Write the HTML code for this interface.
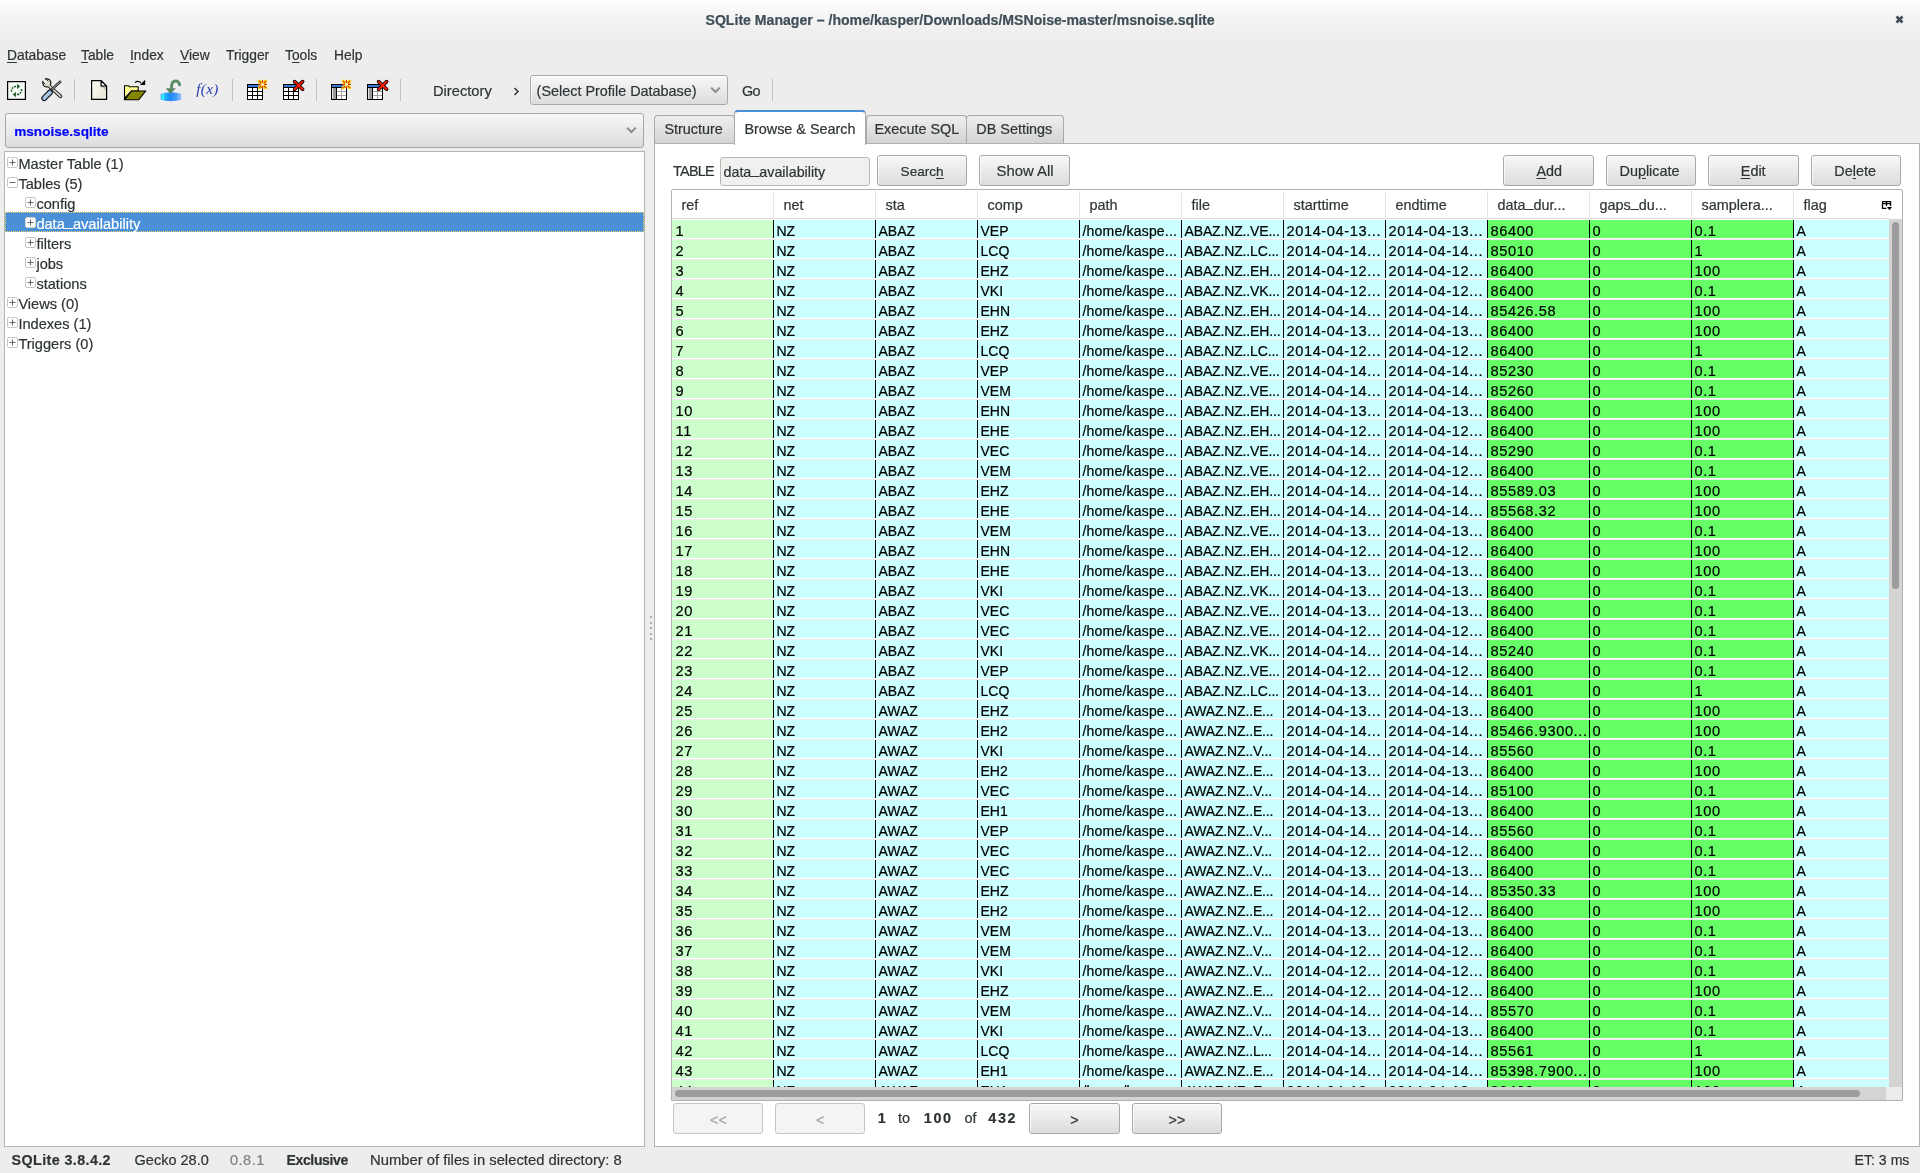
<!DOCTYPE html><html><head><meta charset="utf-8"><style>
html,body{margin:0;padding:0}
body{width:1920px;height:1173px;overflow:hidden;background:#ededed;position:relative;font-family:"Liberation Sans",sans-serif;color:#2e3436}
.t{position:absolute;white-space:pre;line-height:1;-webkit-text-stroke:0.2px currentColor}
.b{position:absolute;box-sizing:border-box}
.u{text-decoration:underline;text-underline-offset:2px}
svg{position:absolute;overflow:visible}
.btn{position:absolute;box-sizing:border-box;border:1px solid #a6a9a4;border-radius:3px;background:linear-gradient(#f8f8f8,#dcdcdc);box-shadow:inset 1px 1px 0 rgba(255,255,255,0.7)}
.btnd{position:absolute;box-sizing:border-box;border:1px solid #c6c6c6;border-radius:3px;background:#f4f4f2}
.sep{position:absolute;width:1px;background:#c0c0c0}
.us{position:relative;top:-3px}
</style></head><body><div id="root" style="position:absolute;left:0;top:0;width:1920px;height:1173px;overflow:hidden;will-change:transform">

<div class="b" style="left:0px;top:0px;width:1920px;height:38px;background:linear-gradient(#ffffff 0px,#f6f6f6 12px,#ededed 38px)"></div>
<div class="t" style="left:705.50px;top:12.66px;font-size:14.1px;font-weight:700;color:#3f4f57;">SQLite Manager – /home/kasper/Downloads/MSNoise-master/msnoise.sqlite</div>
<svg style="left:1895px;top:15px" width="9" height="9" viewBox="0 0 9 9"><path d="M1.5 1.5L7.5 7.5M7.5 1.5L1.5 7.5" stroke="#3c4b52" stroke-width="2.6" stroke-linecap="butt"/></svg>
<div class="t" style="left:7.00px;top:49.32px;font-size:13.8px;"><span class="u">D</span>atabase</div>
<div class="t" style="left:81.00px;top:49.32px;font-size:13.8px;"><span class="u">T</span>able</div>
<div class="t" style="left:130.00px;top:49.32px;font-size:13.8px;"><span class="u">I</span>ndex</div>
<div class="t" style="left:180.00px;top:49.32px;font-size:13.8px;"><span class="u">V</span>iew</div>
<div class="t" style="left:226.00px;top:49.32px;font-size:13.8px;">Trigger</div>
<div class="t" style="left:285.00px;top:49.32px;font-size:13.8px;">T<span class="u">o</span>ols</div>
<div class="t" style="left:334.00px;top:49.32px;font-size:13.8px;">Help</div>
<div class="sep" style="left:74px;top:79px;height:22px"></div>
<div class="sep" style="left:232px;top:79px;height:22px"></div>
<div class="sep" style="left:316px;top:79px;height:22px"></div>
<div class="sep" style="left:400px;top:79px;height:22px"></div>
<div class="sep" style="left:772px;top:79px;height:22px"></div>
<svg style="left:7px;top:81px" width="19" height="19" viewBox="0 0 19 19">
<rect x="0.6" y="0.6" width="17.8" height="17.8" fill="#f6fbf5" stroke="#000" stroke-width="1.2"/>
<path d="M4.4 10.8 C4.4 7.4 6.2 5.4 9 5.4 L10.6 5.4" fill="none" stroke="#1d5a2a" stroke-width="1.5" stroke-dasharray="2 0.9"/>
<path d="M10.1 2.7 L13.2 5.4 L10.1 8.1 Z" fill="#1d5a2a"/>
<path d="M14.6 8 C14.6 11.4 12.8 13.5 10 13.5 L8.4 13.5" fill="none" stroke="#1d5a2a" stroke-width="1.5" stroke-dasharray="2 0.9"/>
<path d="M8.9 10.8 L5.8 13.5 L8.9 16.2 Z" fill="#1d5a2a"/>
</svg>
<svg style="left:40px;top:77px" width="24" height="25" viewBox="0 0 24 25">
<path d="M9 9 L20.6 19.4" stroke="#1a1a1a" stroke-width="3.6" stroke-linecap="round"/>
<circle cx="6.8" cy="5.9" r="4" fill="#dedbcf" stroke="#1a1a1a" stroke-width="1.3"/>
<path d="M6.6 5.7 L2.6 1.7" stroke="#ededed" stroke-width="2.6" stroke-linecap="butt"/>
<path d="M5.4 7.4 L2.4 4.4 M8.4 4.4 L5.4 1.4" stroke="#1a1a1a" stroke-width="0.9"/>
<path d="M8.4 8.4 L20.6 19.4" stroke="#dedbcf" stroke-width="1.7" stroke-linecap="round"/>
<path d="M11.6 12.6 L20.2 4.8" stroke="#1a1a1a" stroke-width="2.5" stroke-linecap="round"/>
<path d="M11.6 12.6 L20.2 4.8" stroke="#d4d4d0" stroke-width="0.9" stroke-linecap="round"/>
<path d="M4.2 21.2 L10 15.4" stroke="#111" stroke-width="5.8" stroke-linecap="round"/>
<path d="M4.2 21.2 L10 15.4" stroke="#a2bde2" stroke-width="3.6" stroke-linecap="round"/>
<path d="M4.6 19.8 L8.8 15.6" stroke="#c8daf2" stroke-width="0.8" stroke-linecap="round"/>
</svg>
<svg style="left:91px;top:80px" width="17" height="20" viewBox="0 0 17 20">
<defs><linearGradient id="pg" x1="0" y1="0" x2="1" y2="1"><stop offset="0" stop-color="#fbfbf4"/><stop offset="1" stop-color="#e6e5d2"/></linearGradient></defs>
<path d="M0.6 0.6 H10.1 L15.6 6.1 V19.4 H0.6 Z" fill="url(#pg)" stroke="#000" stroke-width="1.2" stroke-linejoin="round"/>
<path d="M10.1 0.6 V6.1 H15.6 Z" fill="#fdfdfd" stroke="#000" stroke-width="1.2" stroke-linejoin="round"/>
<path d="M10.7 6.7 H15 V11 Z" fill="#bdbdb4"/>
</svg>
<svg style="left:123px;top:79px" width="24" height="22" viewBox="0 0 24 22">
<defs><pattern id="chk" width="2" height="2" patternUnits="userSpaceOnUse"><rect width="2" height="2" fill="#ffff20"/><rect width="1" height="1" fill="#fff"/><rect x="1" y="1" width="1" height="1" fill="#fff"/></pattern></defs>
<path d="M1.5 20.3 V6.8 H5.6 L6.6 7.8 H15.2 V12 H8.6 L1.5 19.5 Z" fill="url(#chk)" stroke="#000" stroke-width="1.1" stroke-linejoin="round"/>
<path d="M1.5 20.8 H15.6 L22.8 12 H8.6 Z" fill="#858500" stroke="#000" stroke-width="1.1" stroke-linejoin="round"/>
<path d="M12 3.6 Q14.5 1 18 3.8" fill="none" stroke="#000" stroke-width="1.1"/>
<path d="M16.8 6 H22.2 V0.8 Z" fill="#000"/>
</svg>
<svg style="left:160px;top:79px" width="22" height="23" viewBox="0 0 22 23">
<defs><linearGradient id="disc" x1="0" x2="1" y1="0" y2="0"><stop offset="0" stop-color="#22d8ff"/><stop offset="0.1" stop-color="#40fcff"/><stop offset="0.2" stop-color="#1ab8ff"/><stop offset="0.45" stop-color="#1a86ff"/><stop offset="0.8" stop-color="#4aa0f8"/><stop offset="1" stop-color="#a8cdf6"/></linearGradient></defs>
<path d="M1 15.2 Q10.8 12 20.6 15.2 V20.4 Q10.8 23.4 1 20.4 Z" fill="url(#disc)" stroke="#3a8cff" stroke-width="0.6" stroke-linejoin="round"/>
<path d="M19.6 5.8 C19.2 1 12.2 0.2 11.6 6.8 L11.3 9.8" fill="none" stroke="#5b8a66" stroke-width="2.9" stroke-linecap="round"/>
<path d="M5.8 9.2 H15.9 L10.4 15 Z" fill="#5b8a66"/>
</svg>
<div class="t" style="left:196.30px;top:81.43px;font-size:15.2px;color:#2a3aae;letter-spacing:0.3px;font-family:'Liberation Serif',serif;-webkit-text-stroke:0;"><i>f(x)</i></div>
<svg style="left:246px;top:79px" width="24" height="22" viewBox="0 0 24 22"><rect x="1" y="5" width="16" height="16" fill="#000"/><rect x="2" y="6" width="14" height="2" fill="#3a78d0"/><rect x="2" y="9" width="4" height="3" fill="#fff"/><rect x="2" y="13" width="4" height="3" fill="#fff"/><rect x="2" y="17" width="4" height="3" fill="#fff"/><rect x="7" y="9" width="4" height="3" fill="#fff"/><rect x="7" y="13" width="4" height="3" fill="#fff"/><rect x="7" y="17" width="4" height="3" fill="#fff"/><rect x="12" y="9" width="4" height="3" fill="#fff"/><rect x="12" y="13" width="4" height="3" fill="#fff"/><rect x="12" y="17" width="4" height="3" fill="#fff"/><path d="M17.90 6.85 L19.80 8.75 M17.90 4.05 L19.80 2.15 M15.10 6.85 L13.20 8.75 M15.10 4.05 L13.20 2.15 " stroke="#ffd400" stroke-width="3" stroke-linecap="round"/><path d="M17.90 6.85 L19.80 8.75 M17.90 4.05 L19.80 2.15 M15.10 6.85 L13.20 8.75 M15.10 4.05 L13.20 2.15 " stroke="#fff066" stroke-width="0.6" stroke-linecap="round" opacity="0.0"/><path d="M18.40 7.35 L19.70 8.65 M18.40 3.55 L19.70 2.25 M14.60 7.35 L13.30 8.65 M14.60 3.55 L13.30 2.25 " stroke="#d83a00" stroke-width="1.1" stroke-linecap="round"/><path d="M16.5 1.0499999999999998 V4.25 M16.5 6.65 V9.850000000000001 M12.1 5.45 H15.3 M17.7 5.45 H20.9" stroke="#d83a00" stroke-width="1.2"/><circle cx="16.5" cy="5.45" r="1.3" fill="#fff"/></svg>
<svg style="left:282px;top:79px" width="24" height="22" viewBox="0 0 24 22"><rect x="1" y="5" width="16" height="16" fill="#000"/><rect x="2" y="6" width="14" height="2" fill="#3a78d0"/><rect x="2" y="9" width="4" height="3" fill="#fff"/><rect x="2" y="13" width="4" height="3" fill="#fff"/><rect x="2" y="17" width="4" height="3" fill="#fff"/><rect x="7" y="9" width="4" height="3" fill="#fff"/><rect x="7" y="13" width="4" height="3" fill="#fff"/><rect x="7" y="17" width="4" height="3" fill="#fff"/><rect x="12" y="9" width="4" height="3" fill="#fff"/><rect x="12" y="13" width="4" height="3" fill="#fff"/><rect x="12" y="17" width="4" height="3" fill="#fff"/><path d="M12.6 2.6 L20.6 10.2 M20.6 2.6 L12.6 10.2" stroke="#000" stroke-width="3.6" stroke-linecap="round"/><path d="M12.6 2.6 L20.6 10.2 M20.6 2.6 L12.6 10.2" stroke="#ff1a00" stroke-width="2" stroke-linecap="round"/></svg>
<svg style="left:330px;top:79px" width="24" height="22" viewBox="0 0 24 22"><rect x="1" y="5" width="16" height="16" fill="#000"/><rect x="2" y="6" width="14" height="2" fill="#3a78d0"/><rect x="2" y="9" width="4" height="11" fill="#9a9a98"/><rect x="2" y="9" width="1" height="11" fill="#e6e4dc"/><rect x="7" y="9" width="9" height="11" fill="#fff"/><rect x="11" y="9" width="1" height="11" fill="#a0a09c"/><rect x="7" y="12" width="9" height="1" fill="#a0a09c"/><rect x="7" y="16" width="9" height="1" fill="#a0a09c"/><path d="M17.90 6.85 L19.80 8.75 M17.90 4.05 L19.80 2.15 M15.10 6.85 L13.20 8.75 M15.10 4.05 L13.20 2.15 " stroke="#ffd400" stroke-width="3" stroke-linecap="round"/><path d="M17.90 6.85 L19.80 8.75 M17.90 4.05 L19.80 2.15 M15.10 6.85 L13.20 8.75 M15.10 4.05 L13.20 2.15 " stroke="#fff066" stroke-width="0.6" stroke-linecap="round" opacity="0.0"/><path d="M18.40 7.35 L19.70 8.65 M18.40 3.55 L19.70 2.25 M14.60 7.35 L13.30 8.65 M14.60 3.55 L13.30 2.25 " stroke="#d83a00" stroke-width="1.1" stroke-linecap="round"/><path d="M16.5 1.0499999999999998 V4.25 M16.5 6.65 V9.850000000000001 M12.1 5.45 H15.3 M17.7 5.45 H20.9" stroke="#d83a00" stroke-width="1.2"/><circle cx="16.5" cy="5.45" r="1.3" fill="#fff"/></svg>
<svg style="left:366px;top:79px" width="24" height="22" viewBox="0 0 24 22"><rect x="1" y="5" width="16" height="16" fill="#000"/><rect x="2" y="6" width="14" height="2" fill="#3a78d0"/><rect x="2" y="9" width="4" height="11" fill="#9a9a98"/><rect x="2" y="9" width="1" height="11" fill="#e6e4dc"/><rect x="7" y="9" width="9" height="11" fill="#fff"/><rect x="11" y="9" width="1" height="11" fill="#a0a09c"/><rect x="7" y="12" width="9" height="1" fill="#a0a09c"/><rect x="7" y="16" width="9" height="1" fill="#a0a09c"/><path d="M12.6 2.6 L20.6 10.2 M20.6 2.6 L12.6 10.2" stroke="#000" stroke-width="3.6" stroke-linecap="round"/><path d="M12.6 2.6 L20.6 10.2 M20.6 2.6 L12.6 10.2" stroke="#ff1a00" stroke-width="2" stroke-linecap="round"/></svg>
<div class="t" style="left:433.00px;top:83.76px;font-size:14.7px;">Directory</div>
<svg style="left:513px;top:87px" width="7" height="9" viewBox="0 0 7 9"><path d="M1.5 1 L5 4.5 L1.5 8" fill="none" stroke="#2e3436" stroke-width="1.5"/></svg>
<div class="btn" style="left:530px;top:75px;width:198px;height:30px"></div>
<div class="t" style="left:536.60px;top:84.01px;font-size:14.4px;">(Select Profile Database)</div>
<svg style="left:710px;top:86px" width="11" height="8" viewBox="0 0 11 8"><path d="M1.2 1.6 L5.5 6 L9.8 1.6" fill="none" stroke="#8b8d89" stroke-width="2"/></svg>
<div class="t" style="left:742.00px;top:84.01px;font-size:14.4px;letter-spacing:-0.8px;">Go</div>
<div class="b" style="left:5px;top:113px;width:639px;height:35px;border:1px solid #a6a8a4;border-radius:3px;background:linear-gradient(#f8f8f8,#dcdcdc)"></div>
<div class="t" style="left:14.20px;top:124.59px;font-size:13.6px;font-weight:700;color:#0000ff;">msnoise.sqlite</div>
<svg style="left:626px;top:126px" width="11" height="8" viewBox="0 0 11 8"><path d="M1 1.6 L5.4 6 L9.8 1.6" fill="none" stroke="#8b8d89" stroke-width="2"/></svg>
<div class="b" style="left:4px;top:151px;width:641px;height:996px;border:1px solid #b4b6b2;background:#fff"></div>
<div class="b" style="left:5px;top:212px;width:639px;height:20px;background:#4a90d9;border:1px dotted #f2d36a"></div>
<svg style="left:7px;top:157px" width="11" height="11" viewBox="0 0 11 11"><rect x="0.5" y="0.5" width="10" height="10" rx="1.5" fill="#fff" stroke="#c8c8c4" stroke-width="1"/><path d="M2.5 5.5 H8.5" stroke="#666" stroke-width="1"/><path d="M5.5 2.5 V8.5" stroke="#666" stroke-width="1"/></svg>
<div class="t" style="left:18.40px;top:156.64px;font-size:14.6px;">Master Table (1)</div>
<svg style="left:7px;top:177px" width="11" height="11" viewBox="0 0 11 11"><rect x="0.5" y="0.5" width="10" height="10" rx="1.5" fill="#fff" stroke="#c8c8c4" stroke-width="1"/><path d="M2.5 5.5 H8.5" stroke="#666" stroke-width="1"/></svg>
<div class="t" style="left:18.40px;top:176.64px;font-size:14.6px;">Tables (5)</div>
<svg style="left:25px;top:197px" width="11" height="11" viewBox="0 0 11 11"><rect x="0.5" y="0.5" width="10" height="10" rx="1.5" fill="#fff" stroke="#c8c8c4" stroke-width="1"/><path d="M2.5 5.5 H8.5" stroke="#666" stroke-width="1"/><path d="M5.5 2.5 V8.5" stroke="#666" stroke-width="1"/></svg>
<div class="t" style="left:36.40px;top:196.64px;font-size:14.6px;">config</div>
<svg style="left:25px;top:217px" width="11" height="11" viewBox="0 0 11 11"><rect x="0.5" y="0.5" width="10" height="10" rx="1.5" fill="#fff" stroke="#d8d4c8" stroke-width="1"/><path d="M2.5 5.5 H8.5" stroke="#666" stroke-width="1"/><path d="M5.5 2.5 V8.5" stroke="#666" stroke-width="1"/></svg>
<div class="t" style="left:36.40px;top:216.64px;font-size:14.6px;color:#ffffff;">data<span class="us">_</span>availability</div>
<svg style="left:25px;top:237px" width="11" height="11" viewBox="0 0 11 11"><rect x="0.5" y="0.5" width="10" height="10" rx="1.5" fill="#fff" stroke="#c8c8c4" stroke-width="1"/><path d="M2.5 5.5 H8.5" stroke="#666" stroke-width="1"/><path d="M5.5 2.5 V8.5" stroke="#666" stroke-width="1"/></svg>
<div class="t" style="left:36.40px;top:236.64px;font-size:14.6px;">filters</div>
<svg style="left:25px;top:257px" width="11" height="11" viewBox="0 0 11 11"><rect x="0.5" y="0.5" width="10" height="10" rx="1.5" fill="#fff" stroke="#c8c8c4" stroke-width="1"/><path d="M2.5 5.5 H8.5" stroke="#666" stroke-width="1"/><path d="M5.5 2.5 V8.5" stroke="#666" stroke-width="1"/></svg>
<div class="t" style="left:36.40px;top:256.64px;font-size:14.6px;">jobs</div>
<svg style="left:25px;top:277px" width="11" height="11" viewBox="0 0 11 11"><rect x="0.5" y="0.5" width="10" height="10" rx="1.5" fill="#fff" stroke="#c8c8c4" stroke-width="1"/><path d="M2.5 5.5 H8.5" stroke="#666" stroke-width="1"/><path d="M5.5 2.5 V8.5" stroke="#666" stroke-width="1"/></svg>
<div class="t" style="left:36.40px;top:276.64px;font-size:14.6px;">stations</div>
<svg style="left:7px;top:297px" width="11" height="11" viewBox="0 0 11 11"><rect x="0.5" y="0.5" width="10" height="10" rx="1.5" fill="#fff" stroke="#c8c8c4" stroke-width="1"/><path d="M2.5 5.5 H8.5" stroke="#666" stroke-width="1"/><path d="M5.5 2.5 V8.5" stroke="#666" stroke-width="1"/></svg>
<div class="t" style="left:18.40px;top:296.64px;font-size:14.6px;">Views (0)</div>
<svg style="left:7px;top:317px" width="11" height="11" viewBox="0 0 11 11"><rect x="0.5" y="0.5" width="10" height="10" rx="1.5" fill="#fff" stroke="#c8c8c4" stroke-width="1"/><path d="M2.5 5.5 H8.5" stroke="#666" stroke-width="1"/><path d="M5.5 2.5 V8.5" stroke="#666" stroke-width="1"/></svg>
<div class="t" style="left:18.40px;top:316.64px;font-size:14.6px;">Indexes (1)</div>
<svg style="left:7px;top:337px" width="11" height="11" viewBox="0 0 11 11"><rect x="0.5" y="0.5" width="10" height="10" rx="1.5" fill="#fff" stroke="#c8c8c4" stroke-width="1"/><path d="M2.5 5.5 H8.5" stroke="#666" stroke-width="1"/><path d="M5.5 2.5 V8.5" stroke="#666" stroke-width="1"/></svg>
<div class="t" style="left:18.40px;top:336.64px;font-size:14.6px;">Triggers (0)</div>
<div class="b" style="left:650px;top:616.0px;width:2px;height:2px;background:#b0b0ac"></div>
<div class="b" style="left:650px;top:621.5px;width:2px;height:2px;background:#b0b0ac"></div>
<div class="b" style="left:650px;top:627.0px;width:2px;height:2px;background:#b0b0ac"></div>
<div class="b" style="left:650px;top:632.5px;width:2px;height:2px;background:#b0b0ac"></div>
<div class="b" style="left:650px;top:638.0px;width:2px;height:2px;background:#b0b0ac"></div>
<div class="b" style="left:654px;top:143px;width:1266px;height:1004px;border:1px solid #b0b2ae;background:#fff"></div>
<div class="b" style="left:654px;top:115px;width:81px;height:28px;border:1px solid #a8aaa6;border-bottom:none;border-radius:4px 4px 0 0;background:linear-gradient(#efefef,#d3d3d3)"></div>
<div class="t" style="left:664.40px;top:121.56px;font-size:14.4px;">Structure</div>
<div class="b" style="left:866px;top:115px;width:101px;height:28px;border:1px solid #a8aaa6;border-bottom:none;border-radius:4px 4px 0 0;background:linear-gradient(#efefef,#d3d3d3)"></div>
<div class="t" style="left:874.40px;top:121.56px;font-size:14.4px;">Execute SQL</div>
<div class="b" style="left:966px;top:115px;width:98px;height:28px;border:1px solid #a8aaa6;border-bottom:none;border-radius:4px 4px 0 0;background:linear-gradient(#efefef,#d3d3d3)"></div>
<div class="t" style="left:976.30px;top:121.56px;font-size:14.4px;">DB Settings</div>
<div class="b" style="left:734px;top:110px;width:132px;height:35px;border:1px solid #a8aaa6;border-top:2px solid #4a90d9;border-bottom:none;border-radius:4px 4px 0 0;background:#fff"></div>
<div class="t" style="left:744.40px;top:121.56px;font-size:14.4px;">Browse &amp; Search</div>
<div class="t" style="left:673.00px;top:164.41px;font-size:14.4px;letter-spacing:-0.7px;">TABLE</div>
<div class="b" style="left:720px;top:157px;width:150px;height:29px;border:1px solid #b8b8b4;border-radius:3px;background:#f0f0ee"></div>
<div class="t" style="left:723.50px;top:164.80px;font-size:14.3px;">data<span class="us">_</span>availability</div>
<div class="btn" style="left:877px;top:155px;width:90px;height:31px"></div>
<div class="t" style="left:900.60px;top:165.39px;font-size:13.6px;">Searc<span class="u">h</span></div>
<div class="btn" style="left:979px;top:155px;width:91px;height:31px"></div>
<div class="t" style="left:996.50px;top:164.29px;font-size:14.9px;">Show All</div>
<div class="btn" style="left:1503px;top:155px;width:91px;height:31px"></div>
<div class="t" style="left:1536.50px;top:163.71px;font-size:14.4px;"><span class="u">A</span>dd</div>
<div class="btn" style="left:1606px;top:155px;width:90px;height:31px"></div>
<div class="t" style="left:1619.50px;top:163.71px;font-size:14.4px;">Du<span class="u">p</span>licate</div>
<div class="btn" style="left:1708px;top:155px;width:91px;height:31px"></div>
<div class="t" style="left:1740.80px;top:163.71px;font-size:14.4px;"><span class="u">E</span>dit</div>
<div class="btn" style="left:1811px;top:155px;width:90px;height:31px"></div>
<div class="t" style="left:1834.30px;top:163.71px;font-size:14.4px;">De<span class="u">l</span>ete</div>
<div class="b" style="left:671px;top:189px;width:1232px;height:912px;border:1px solid #b0b2ae;border-radius:2px 2px 0 0;background:#fff"></div>
<div class="b" style="left:672px;top:218px;width:1217px;height:1px;background:#dadad8"></div>
<div class="t" style="left:681.50px;top:197.81px;font-size:14.4px;">ref</div>
<div class="b" style="left:773px;top:191px;width:1px;height:27px;background:#e4e4e2"></div>
<div class="t" style="left:783.50px;top:197.81px;font-size:14.4px;">net</div>
<div class="b" style="left:875px;top:191px;width:1px;height:27px;background:#e4e4e2"></div>
<div class="t" style="left:885.50px;top:197.81px;font-size:14.4px;">sta</div>
<div class="b" style="left:977px;top:191px;width:1px;height:27px;background:#e4e4e2"></div>
<div class="t" style="left:987.50px;top:197.81px;font-size:14.4px;">comp</div>
<div class="b" style="left:1079px;top:191px;width:1px;height:27px;background:#e4e4e2"></div>
<div class="t" style="left:1089.50px;top:197.81px;font-size:14.4px;">path</div>
<div class="b" style="left:1181px;top:191px;width:1px;height:27px;background:#e4e4e2"></div>
<div class="t" style="left:1191.50px;top:197.81px;font-size:14.4px;">file</div>
<div class="b" style="left:1283px;top:191px;width:1px;height:27px;background:#e4e4e2"></div>
<div class="t" style="left:1293.50px;top:197.81px;font-size:14.4px;">starttime</div>
<div class="b" style="left:1385px;top:191px;width:1px;height:27px;background:#e4e4e2"></div>
<div class="t" style="left:1395.50px;top:197.81px;font-size:14.4px;">endtime</div>
<div class="b" style="left:1487px;top:191px;width:1px;height:27px;background:#e4e4e2"></div>
<div class="t" style="left:1497.50px;top:197.81px;font-size:14.4px;">data<span class="us">_</span>dur...</div>
<div class="b" style="left:1589px;top:191px;width:1px;height:27px;background:#e4e4e2"></div>
<div class="t" style="left:1599.50px;top:197.81px;font-size:14.4px;">gaps<span class="us">_</span>du...</div>
<div class="b" style="left:1691px;top:191px;width:1px;height:27px;background:#e4e4e2"></div>
<div class="t" style="left:1701.50px;top:197.81px;font-size:14.4px;">samplera...</div>
<div class="b" style="left:1793px;top:191px;width:1px;height:27px;background:#e4e4e2"></div>
<div class="t" style="left:1803.50px;top:197.81px;font-size:14.4px;">flag</div>
<svg style="left:1881px;top:200px" width="12" height="11" viewBox="0 0 12 11"><path d="M1.5 8.3 V1.6 H9.6 V5.4 M1.5 3.5 H9.6 M5.5 1.6 V5.4 M1.5 8.3 H5" fill="none" stroke="#000" stroke-width="1.25" stroke-linecap="round" stroke-linejoin="round"/><path d="M6 7 H11 L8.5 10.2 Z" fill="#000"/></svg>
<div style="position:absolute;left:672px;top:219px;width:1217px;height:868px;overflow:hidden">
<div class="b" style="left:0;top:1px;width:101px;height:18px;background:#ccffcc"></div>
<div class="b" style="left:101px;top:1px;width:714px;height:18px;background:#ccffff"></div>
<div class="b" style="left:815px;top:1px;width:306px;height:18px;background:#66ff66"></div>
<div class="b" style="left:1121px;top:1px;width:96px;height:18px;background:#ccffff"></div>
<div class="b" style="left:0;top:20px;width:1217px;height:1px;background:#ebebeb"></div>
<div class="b" style="left:101px;top:1px;width:1px;height:18px;background:#000"></div>
<div class="b" style="left:203px;top:1px;width:1px;height:18px;background:#000"></div>
<div class="b" style="left:305px;top:1px;width:1px;height:18px;background:#000"></div>
<div class="b" style="left:407px;top:1px;width:1px;height:18px;background:#000"></div>
<div class="b" style="left:509px;top:1px;width:1px;height:18px;background:#000"></div>
<div class="b" style="left:611px;top:1px;width:1px;height:18px;background:#000"></div>
<div class="b" style="left:713px;top:1px;width:1px;height:18px;background:#000"></div>
<div class="b" style="left:815px;top:1px;width:1px;height:18px;background:#000"></div>
<div class="b" style="left:917px;top:1px;width:1px;height:18px;background:#000"></div>
<div class="b" style="left:1019px;top:1px;width:1px;height:18px;background:#000"></div>
<div class="b" style="left:1121px;top:1px;width:1px;height:18px;background:#000"></div>
<div class="t" style="left:3.50px;top:4.84px;font-size:14.6px;color:#000;letter-spacing:0.6px;">1</div>
<div class="t" style="left:104.50px;top:5.35px;font-size:14.0px;color:#000;">NZ</div>
<div class="t" style="left:206.50px;top:5.35px;font-size:14.0px;color:#000;">ABAZ</div>
<div class="t" style="left:308.50px;top:5.35px;font-size:14.0px;color:#000;">VEP</div>
<div class="t" style="left:410.50px;top:5.35px;font-size:14.0px;color:#000;letter-spacing:0.2px;">/home/kaspe...</div>
<div class="t" style="left:512.50px;top:5.35px;font-size:14.0px;color:#000;letter-spacing:-0.15px;">ABAZ.NZ..VE...</div>
<div class="t" style="left:614.50px;top:4.84px;font-size:14.6px;color:#000;letter-spacing:0.6px;">2014-04-13...</div>
<div class="t" style="left:716.50px;top:4.84px;font-size:14.6px;color:#000;letter-spacing:0.6px;">2014-04-13...</div>
<div class="t" style="left:818.50px;top:4.84px;font-size:14.6px;color:#000;letter-spacing:0.6px;">86400</div>
<div class="t" style="left:920.50px;top:4.84px;font-size:14.6px;color:#000;letter-spacing:0.6px;">0</div>
<div class="t" style="left:1022.50px;top:4.84px;font-size:14.6px;color:#000;letter-spacing:0.6px;">0.1</div>
<div class="t" style="left:1124.50px;top:5.35px;font-size:14.0px;color:#000;">A</div>
<div class="b" style="left:0;top:21px;width:101px;height:18px;background:#ccffcc"></div>
<div class="b" style="left:101px;top:21px;width:714px;height:18px;background:#ccffff"></div>
<div class="b" style="left:815px;top:21px;width:306px;height:18px;background:#66ff66"></div>
<div class="b" style="left:1121px;top:21px;width:96px;height:18px;background:#ccffff"></div>
<div class="b" style="left:0;top:40px;width:1217px;height:1px;background:#ebebeb"></div>
<div class="b" style="left:101px;top:21px;width:1px;height:18px;background:#000"></div>
<div class="b" style="left:203px;top:21px;width:1px;height:18px;background:#000"></div>
<div class="b" style="left:305px;top:21px;width:1px;height:18px;background:#000"></div>
<div class="b" style="left:407px;top:21px;width:1px;height:18px;background:#000"></div>
<div class="b" style="left:509px;top:21px;width:1px;height:18px;background:#000"></div>
<div class="b" style="left:611px;top:21px;width:1px;height:18px;background:#000"></div>
<div class="b" style="left:713px;top:21px;width:1px;height:18px;background:#000"></div>
<div class="b" style="left:815px;top:21px;width:1px;height:18px;background:#000"></div>
<div class="b" style="left:917px;top:21px;width:1px;height:18px;background:#000"></div>
<div class="b" style="left:1019px;top:21px;width:1px;height:18px;background:#000"></div>
<div class="b" style="left:1121px;top:21px;width:1px;height:18px;background:#000"></div>
<div class="t" style="left:3.50px;top:24.84px;font-size:14.6px;color:#000;letter-spacing:0.6px;">2</div>
<div class="t" style="left:104.50px;top:25.35px;font-size:14.0px;color:#000;">NZ</div>
<div class="t" style="left:206.50px;top:25.35px;font-size:14.0px;color:#000;">ABAZ</div>
<div class="t" style="left:308.50px;top:25.35px;font-size:14.0px;color:#000;">LCQ</div>
<div class="t" style="left:410.50px;top:25.35px;font-size:14.0px;color:#000;letter-spacing:0.2px;">/home/kaspe...</div>
<div class="t" style="left:512.50px;top:25.35px;font-size:14.0px;color:#000;letter-spacing:-0.15px;">ABAZ.NZ..LC...</div>
<div class="t" style="left:614.50px;top:24.84px;font-size:14.6px;color:#000;letter-spacing:0.6px;">2014-04-14...</div>
<div class="t" style="left:716.50px;top:24.84px;font-size:14.6px;color:#000;letter-spacing:0.6px;">2014-04-14...</div>
<div class="t" style="left:818.50px;top:24.84px;font-size:14.6px;color:#000;letter-spacing:0.6px;">85010</div>
<div class="t" style="left:920.50px;top:24.84px;font-size:14.6px;color:#000;letter-spacing:0.6px;">0</div>
<div class="t" style="left:1022.50px;top:24.84px;font-size:14.6px;color:#000;letter-spacing:0.6px;">1</div>
<div class="t" style="left:1124.50px;top:25.35px;font-size:14.0px;color:#000;">A</div>
<div class="b" style="left:0;top:41px;width:101px;height:18px;background:#ccffcc"></div>
<div class="b" style="left:101px;top:41px;width:714px;height:18px;background:#ccffff"></div>
<div class="b" style="left:815px;top:41px;width:306px;height:18px;background:#66ff66"></div>
<div class="b" style="left:1121px;top:41px;width:96px;height:18px;background:#ccffff"></div>
<div class="b" style="left:0;top:60px;width:1217px;height:1px;background:#ebebeb"></div>
<div class="b" style="left:101px;top:41px;width:1px;height:18px;background:#000"></div>
<div class="b" style="left:203px;top:41px;width:1px;height:18px;background:#000"></div>
<div class="b" style="left:305px;top:41px;width:1px;height:18px;background:#000"></div>
<div class="b" style="left:407px;top:41px;width:1px;height:18px;background:#000"></div>
<div class="b" style="left:509px;top:41px;width:1px;height:18px;background:#000"></div>
<div class="b" style="left:611px;top:41px;width:1px;height:18px;background:#000"></div>
<div class="b" style="left:713px;top:41px;width:1px;height:18px;background:#000"></div>
<div class="b" style="left:815px;top:41px;width:1px;height:18px;background:#000"></div>
<div class="b" style="left:917px;top:41px;width:1px;height:18px;background:#000"></div>
<div class="b" style="left:1019px;top:41px;width:1px;height:18px;background:#000"></div>
<div class="b" style="left:1121px;top:41px;width:1px;height:18px;background:#000"></div>
<div class="t" style="left:3.50px;top:44.84px;font-size:14.6px;color:#000;letter-spacing:0.6px;">3</div>
<div class="t" style="left:104.50px;top:45.35px;font-size:14.0px;color:#000;">NZ</div>
<div class="t" style="left:206.50px;top:45.35px;font-size:14.0px;color:#000;">ABAZ</div>
<div class="t" style="left:308.50px;top:45.35px;font-size:14.0px;color:#000;">EHZ</div>
<div class="t" style="left:410.50px;top:45.35px;font-size:14.0px;color:#000;letter-spacing:0.2px;">/home/kaspe...</div>
<div class="t" style="left:512.50px;top:45.35px;font-size:14.0px;color:#000;letter-spacing:-0.15px;">ABAZ.NZ..EH...</div>
<div class="t" style="left:614.50px;top:44.84px;font-size:14.6px;color:#000;letter-spacing:0.6px;">2014-04-12...</div>
<div class="t" style="left:716.50px;top:44.84px;font-size:14.6px;color:#000;letter-spacing:0.6px;">2014-04-12...</div>
<div class="t" style="left:818.50px;top:44.84px;font-size:14.6px;color:#000;letter-spacing:0.6px;">86400</div>
<div class="t" style="left:920.50px;top:44.84px;font-size:14.6px;color:#000;letter-spacing:0.6px;">0</div>
<div class="t" style="left:1022.50px;top:44.84px;font-size:14.6px;color:#000;letter-spacing:0.6px;">100</div>
<div class="t" style="left:1124.50px;top:45.35px;font-size:14.0px;color:#000;">A</div>
<div class="b" style="left:0;top:61px;width:101px;height:18px;background:#ccffcc"></div>
<div class="b" style="left:101px;top:61px;width:714px;height:18px;background:#ccffff"></div>
<div class="b" style="left:815px;top:61px;width:306px;height:18px;background:#66ff66"></div>
<div class="b" style="left:1121px;top:61px;width:96px;height:18px;background:#ccffff"></div>
<div class="b" style="left:0;top:80px;width:1217px;height:1px;background:#ebebeb"></div>
<div class="b" style="left:101px;top:61px;width:1px;height:18px;background:#000"></div>
<div class="b" style="left:203px;top:61px;width:1px;height:18px;background:#000"></div>
<div class="b" style="left:305px;top:61px;width:1px;height:18px;background:#000"></div>
<div class="b" style="left:407px;top:61px;width:1px;height:18px;background:#000"></div>
<div class="b" style="left:509px;top:61px;width:1px;height:18px;background:#000"></div>
<div class="b" style="left:611px;top:61px;width:1px;height:18px;background:#000"></div>
<div class="b" style="left:713px;top:61px;width:1px;height:18px;background:#000"></div>
<div class="b" style="left:815px;top:61px;width:1px;height:18px;background:#000"></div>
<div class="b" style="left:917px;top:61px;width:1px;height:18px;background:#000"></div>
<div class="b" style="left:1019px;top:61px;width:1px;height:18px;background:#000"></div>
<div class="b" style="left:1121px;top:61px;width:1px;height:18px;background:#000"></div>
<div class="t" style="left:3.50px;top:64.84px;font-size:14.6px;color:#000;letter-spacing:0.6px;">4</div>
<div class="t" style="left:104.50px;top:65.35px;font-size:14.0px;color:#000;">NZ</div>
<div class="t" style="left:206.50px;top:65.35px;font-size:14.0px;color:#000;">ABAZ</div>
<div class="t" style="left:308.50px;top:65.35px;font-size:14.0px;color:#000;">VKI</div>
<div class="t" style="left:410.50px;top:65.35px;font-size:14.0px;color:#000;letter-spacing:0.2px;">/home/kaspe...</div>
<div class="t" style="left:512.50px;top:65.35px;font-size:14.0px;color:#000;letter-spacing:-0.15px;">ABAZ.NZ..VK...</div>
<div class="t" style="left:614.50px;top:64.84px;font-size:14.6px;color:#000;letter-spacing:0.6px;">2014-04-12...</div>
<div class="t" style="left:716.50px;top:64.84px;font-size:14.6px;color:#000;letter-spacing:0.6px;">2014-04-12...</div>
<div class="t" style="left:818.50px;top:64.84px;font-size:14.6px;color:#000;letter-spacing:0.6px;">86400</div>
<div class="t" style="left:920.50px;top:64.84px;font-size:14.6px;color:#000;letter-spacing:0.6px;">0</div>
<div class="t" style="left:1022.50px;top:64.84px;font-size:14.6px;color:#000;letter-spacing:0.6px;">0.1</div>
<div class="t" style="left:1124.50px;top:65.35px;font-size:14.0px;color:#000;">A</div>
<div class="b" style="left:0;top:81px;width:101px;height:18px;background:#ccffcc"></div>
<div class="b" style="left:101px;top:81px;width:714px;height:18px;background:#ccffff"></div>
<div class="b" style="left:815px;top:81px;width:306px;height:18px;background:#66ff66"></div>
<div class="b" style="left:1121px;top:81px;width:96px;height:18px;background:#ccffff"></div>
<div class="b" style="left:0;top:100px;width:1217px;height:1px;background:#ebebeb"></div>
<div class="b" style="left:101px;top:81px;width:1px;height:18px;background:#000"></div>
<div class="b" style="left:203px;top:81px;width:1px;height:18px;background:#000"></div>
<div class="b" style="left:305px;top:81px;width:1px;height:18px;background:#000"></div>
<div class="b" style="left:407px;top:81px;width:1px;height:18px;background:#000"></div>
<div class="b" style="left:509px;top:81px;width:1px;height:18px;background:#000"></div>
<div class="b" style="left:611px;top:81px;width:1px;height:18px;background:#000"></div>
<div class="b" style="left:713px;top:81px;width:1px;height:18px;background:#000"></div>
<div class="b" style="left:815px;top:81px;width:1px;height:18px;background:#000"></div>
<div class="b" style="left:917px;top:81px;width:1px;height:18px;background:#000"></div>
<div class="b" style="left:1019px;top:81px;width:1px;height:18px;background:#000"></div>
<div class="b" style="left:1121px;top:81px;width:1px;height:18px;background:#000"></div>
<div class="t" style="left:3.50px;top:84.84px;font-size:14.6px;color:#000;letter-spacing:0.6px;">5</div>
<div class="t" style="left:104.50px;top:85.35px;font-size:14.0px;color:#000;">NZ</div>
<div class="t" style="left:206.50px;top:85.35px;font-size:14.0px;color:#000;">ABAZ</div>
<div class="t" style="left:308.50px;top:85.35px;font-size:14.0px;color:#000;">EHN</div>
<div class="t" style="left:410.50px;top:85.35px;font-size:14.0px;color:#000;letter-spacing:0.2px;">/home/kaspe...</div>
<div class="t" style="left:512.50px;top:85.35px;font-size:14.0px;color:#000;letter-spacing:-0.15px;">ABAZ.NZ..EH...</div>
<div class="t" style="left:614.50px;top:84.84px;font-size:14.6px;color:#000;letter-spacing:0.6px;">2014-04-14...</div>
<div class="t" style="left:716.50px;top:84.84px;font-size:14.6px;color:#000;letter-spacing:0.6px;">2014-04-14...</div>
<div class="t" style="left:818.50px;top:84.84px;font-size:14.6px;color:#000;letter-spacing:0.6px;">85426.58</div>
<div class="t" style="left:920.50px;top:84.84px;font-size:14.6px;color:#000;letter-spacing:0.6px;">0</div>
<div class="t" style="left:1022.50px;top:84.84px;font-size:14.6px;color:#000;letter-spacing:0.6px;">100</div>
<div class="t" style="left:1124.50px;top:85.35px;font-size:14.0px;color:#000;">A</div>
<div class="b" style="left:0;top:101px;width:101px;height:18px;background:#ccffcc"></div>
<div class="b" style="left:101px;top:101px;width:714px;height:18px;background:#ccffff"></div>
<div class="b" style="left:815px;top:101px;width:306px;height:18px;background:#66ff66"></div>
<div class="b" style="left:1121px;top:101px;width:96px;height:18px;background:#ccffff"></div>
<div class="b" style="left:0;top:120px;width:1217px;height:1px;background:#ebebeb"></div>
<div class="b" style="left:101px;top:101px;width:1px;height:18px;background:#000"></div>
<div class="b" style="left:203px;top:101px;width:1px;height:18px;background:#000"></div>
<div class="b" style="left:305px;top:101px;width:1px;height:18px;background:#000"></div>
<div class="b" style="left:407px;top:101px;width:1px;height:18px;background:#000"></div>
<div class="b" style="left:509px;top:101px;width:1px;height:18px;background:#000"></div>
<div class="b" style="left:611px;top:101px;width:1px;height:18px;background:#000"></div>
<div class="b" style="left:713px;top:101px;width:1px;height:18px;background:#000"></div>
<div class="b" style="left:815px;top:101px;width:1px;height:18px;background:#000"></div>
<div class="b" style="left:917px;top:101px;width:1px;height:18px;background:#000"></div>
<div class="b" style="left:1019px;top:101px;width:1px;height:18px;background:#000"></div>
<div class="b" style="left:1121px;top:101px;width:1px;height:18px;background:#000"></div>
<div class="t" style="left:3.50px;top:104.84px;font-size:14.6px;color:#000;letter-spacing:0.6px;">6</div>
<div class="t" style="left:104.50px;top:105.35px;font-size:14.0px;color:#000;">NZ</div>
<div class="t" style="left:206.50px;top:105.35px;font-size:14.0px;color:#000;">ABAZ</div>
<div class="t" style="left:308.50px;top:105.35px;font-size:14.0px;color:#000;">EHZ</div>
<div class="t" style="left:410.50px;top:105.35px;font-size:14.0px;color:#000;letter-spacing:0.2px;">/home/kaspe...</div>
<div class="t" style="left:512.50px;top:105.35px;font-size:14.0px;color:#000;letter-spacing:-0.15px;">ABAZ.NZ..EH...</div>
<div class="t" style="left:614.50px;top:104.84px;font-size:14.6px;color:#000;letter-spacing:0.6px;">2014-04-13...</div>
<div class="t" style="left:716.50px;top:104.84px;font-size:14.6px;color:#000;letter-spacing:0.6px;">2014-04-13...</div>
<div class="t" style="left:818.50px;top:104.84px;font-size:14.6px;color:#000;letter-spacing:0.6px;">86400</div>
<div class="t" style="left:920.50px;top:104.84px;font-size:14.6px;color:#000;letter-spacing:0.6px;">0</div>
<div class="t" style="left:1022.50px;top:104.84px;font-size:14.6px;color:#000;letter-spacing:0.6px;">100</div>
<div class="t" style="left:1124.50px;top:105.35px;font-size:14.0px;color:#000;">A</div>
<div class="b" style="left:0;top:121px;width:101px;height:18px;background:#ccffcc"></div>
<div class="b" style="left:101px;top:121px;width:714px;height:18px;background:#ccffff"></div>
<div class="b" style="left:815px;top:121px;width:306px;height:18px;background:#66ff66"></div>
<div class="b" style="left:1121px;top:121px;width:96px;height:18px;background:#ccffff"></div>
<div class="b" style="left:0;top:140px;width:1217px;height:1px;background:#ebebeb"></div>
<div class="b" style="left:101px;top:121px;width:1px;height:18px;background:#000"></div>
<div class="b" style="left:203px;top:121px;width:1px;height:18px;background:#000"></div>
<div class="b" style="left:305px;top:121px;width:1px;height:18px;background:#000"></div>
<div class="b" style="left:407px;top:121px;width:1px;height:18px;background:#000"></div>
<div class="b" style="left:509px;top:121px;width:1px;height:18px;background:#000"></div>
<div class="b" style="left:611px;top:121px;width:1px;height:18px;background:#000"></div>
<div class="b" style="left:713px;top:121px;width:1px;height:18px;background:#000"></div>
<div class="b" style="left:815px;top:121px;width:1px;height:18px;background:#000"></div>
<div class="b" style="left:917px;top:121px;width:1px;height:18px;background:#000"></div>
<div class="b" style="left:1019px;top:121px;width:1px;height:18px;background:#000"></div>
<div class="b" style="left:1121px;top:121px;width:1px;height:18px;background:#000"></div>
<div class="t" style="left:3.50px;top:124.84px;font-size:14.6px;color:#000;letter-spacing:0.6px;">7</div>
<div class="t" style="left:104.50px;top:125.35px;font-size:14.0px;color:#000;">NZ</div>
<div class="t" style="left:206.50px;top:125.35px;font-size:14.0px;color:#000;">ABAZ</div>
<div class="t" style="left:308.50px;top:125.35px;font-size:14.0px;color:#000;">LCQ</div>
<div class="t" style="left:410.50px;top:125.35px;font-size:14.0px;color:#000;letter-spacing:0.2px;">/home/kaspe...</div>
<div class="t" style="left:512.50px;top:125.35px;font-size:14.0px;color:#000;letter-spacing:-0.15px;">ABAZ.NZ..LC...</div>
<div class="t" style="left:614.50px;top:124.84px;font-size:14.6px;color:#000;letter-spacing:0.6px;">2014-04-12...</div>
<div class="t" style="left:716.50px;top:124.84px;font-size:14.6px;color:#000;letter-spacing:0.6px;">2014-04-12...</div>
<div class="t" style="left:818.50px;top:124.84px;font-size:14.6px;color:#000;letter-spacing:0.6px;">86400</div>
<div class="t" style="left:920.50px;top:124.84px;font-size:14.6px;color:#000;letter-spacing:0.6px;">0</div>
<div class="t" style="left:1022.50px;top:124.84px;font-size:14.6px;color:#000;letter-spacing:0.6px;">1</div>
<div class="t" style="left:1124.50px;top:125.35px;font-size:14.0px;color:#000;">A</div>
<div class="b" style="left:0;top:141px;width:101px;height:18px;background:#ccffcc"></div>
<div class="b" style="left:101px;top:141px;width:714px;height:18px;background:#ccffff"></div>
<div class="b" style="left:815px;top:141px;width:306px;height:18px;background:#66ff66"></div>
<div class="b" style="left:1121px;top:141px;width:96px;height:18px;background:#ccffff"></div>
<div class="b" style="left:0;top:160px;width:1217px;height:1px;background:#ebebeb"></div>
<div class="b" style="left:101px;top:141px;width:1px;height:18px;background:#000"></div>
<div class="b" style="left:203px;top:141px;width:1px;height:18px;background:#000"></div>
<div class="b" style="left:305px;top:141px;width:1px;height:18px;background:#000"></div>
<div class="b" style="left:407px;top:141px;width:1px;height:18px;background:#000"></div>
<div class="b" style="left:509px;top:141px;width:1px;height:18px;background:#000"></div>
<div class="b" style="left:611px;top:141px;width:1px;height:18px;background:#000"></div>
<div class="b" style="left:713px;top:141px;width:1px;height:18px;background:#000"></div>
<div class="b" style="left:815px;top:141px;width:1px;height:18px;background:#000"></div>
<div class="b" style="left:917px;top:141px;width:1px;height:18px;background:#000"></div>
<div class="b" style="left:1019px;top:141px;width:1px;height:18px;background:#000"></div>
<div class="b" style="left:1121px;top:141px;width:1px;height:18px;background:#000"></div>
<div class="t" style="left:3.50px;top:144.84px;font-size:14.6px;color:#000;letter-spacing:0.6px;">8</div>
<div class="t" style="left:104.50px;top:145.35px;font-size:14.0px;color:#000;">NZ</div>
<div class="t" style="left:206.50px;top:145.35px;font-size:14.0px;color:#000;">ABAZ</div>
<div class="t" style="left:308.50px;top:145.35px;font-size:14.0px;color:#000;">VEP</div>
<div class="t" style="left:410.50px;top:145.35px;font-size:14.0px;color:#000;letter-spacing:0.2px;">/home/kaspe...</div>
<div class="t" style="left:512.50px;top:145.35px;font-size:14.0px;color:#000;letter-spacing:-0.15px;">ABAZ.NZ..VE...</div>
<div class="t" style="left:614.50px;top:144.84px;font-size:14.6px;color:#000;letter-spacing:0.6px;">2014-04-14...</div>
<div class="t" style="left:716.50px;top:144.84px;font-size:14.6px;color:#000;letter-spacing:0.6px;">2014-04-14...</div>
<div class="t" style="left:818.50px;top:144.84px;font-size:14.6px;color:#000;letter-spacing:0.6px;">85230</div>
<div class="t" style="left:920.50px;top:144.84px;font-size:14.6px;color:#000;letter-spacing:0.6px;">0</div>
<div class="t" style="left:1022.50px;top:144.84px;font-size:14.6px;color:#000;letter-spacing:0.6px;">0.1</div>
<div class="t" style="left:1124.50px;top:145.35px;font-size:14.0px;color:#000;">A</div>
<div class="b" style="left:0;top:161px;width:101px;height:18px;background:#ccffcc"></div>
<div class="b" style="left:101px;top:161px;width:714px;height:18px;background:#ccffff"></div>
<div class="b" style="left:815px;top:161px;width:306px;height:18px;background:#66ff66"></div>
<div class="b" style="left:1121px;top:161px;width:96px;height:18px;background:#ccffff"></div>
<div class="b" style="left:0;top:180px;width:1217px;height:1px;background:#ebebeb"></div>
<div class="b" style="left:101px;top:161px;width:1px;height:18px;background:#000"></div>
<div class="b" style="left:203px;top:161px;width:1px;height:18px;background:#000"></div>
<div class="b" style="left:305px;top:161px;width:1px;height:18px;background:#000"></div>
<div class="b" style="left:407px;top:161px;width:1px;height:18px;background:#000"></div>
<div class="b" style="left:509px;top:161px;width:1px;height:18px;background:#000"></div>
<div class="b" style="left:611px;top:161px;width:1px;height:18px;background:#000"></div>
<div class="b" style="left:713px;top:161px;width:1px;height:18px;background:#000"></div>
<div class="b" style="left:815px;top:161px;width:1px;height:18px;background:#000"></div>
<div class="b" style="left:917px;top:161px;width:1px;height:18px;background:#000"></div>
<div class="b" style="left:1019px;top:161px;width:1px;height:18px;background:#000"></div>
<div class="b" style="left:1121px;top:161px;width:1px;height:18px;background:#000"></div>
<div class="t" style="left:3.50px;top:164.84px;font-size:14.6px;color:#000;letter-spacing:0.6px;">9</div>
<div class="t" style="left:104.50px;top:165.35px;font-size:14.0px;color:#000;">NZ</div>
<div class="t" style="left:206.50px;top:165.35px;font-size:14.0px;color:#000;">ABAZ</div>
<div class="t" style="left:308.50px;top:165.35px;font-size:14.0px;color:#000;">VEM</div>
<div class="t" style="left:410.50px;top:165.35px;font-size:14.0px;color:#000;letter-spacing:0.2px;">/home/kaspe...</div>
<div class="t" style="left:512.50px;top:165.35px;font-size:14.0px;color:#000;letter-spacing:-0.15px;">ABAZ.NZ..VE...</div>
<div class="t" style="left:614.50px;top:164.84px;font-size:14.6px;color:#000;letter-spacing:0.6px;">2014-04-14...</div>
<div class="t" style="left:716.50px;top:164.84px;font-size:14.6px;color:#000;letter-spacing:0.6px;">2014-04-14...</div>
<div class="t" style="left:818.50px;top:164.84px;font-size:14.6px;color:#000;letter-spacing:0.6px;">85260</div>
<div class="t" style="left:920.50px;top:164.84px;font-size:14.6px;color:#000;letter-spacing:0.6px;">0</div>
<div class="t" style="left:1022.50px;top:164.84px;font-size:14.6px;color:#000;letter-spacing:0.6px;">0.1</div>
<div class="t" style="left:1124.50px;top:165.35px;font-size:14.0px;color:#000;">A</div>
<div class="b" style="left:0;top:181px;width:101px;height:18px;background:#ccffcc"></div>
<div class="b" style="left:101px;top:181px;width:714px;height:18px;background:#ccffff"></div>
<div class="b" style="left:815px;top:181px;width:306px;height:18px;background:#66ff66"></div>
<div class="b" style="left:1121px;top:181px;width:96px;height:18px;background:#ccffff"></div>
<div class="b" style="left:0;top:200px;width:1217px;height:1px;background:#ebebeb"></div>
<div class="b" style="left:101px;top:181px;width:1px;height:18px;background:#000"></div>
<div class="b" style="left:203px;top:181px;width:1px;height:18px;background:#000"></div>
<div class="b" style="left:305px;top:181px;width:1px;height:18px;background:#000"></div>
<div class="b" style="left:407px;top:181px;width:1px;height:18px;background:#000"></div>
<div class="b" style="left:509px;top:181px;width:1px;height:18px;background:#000"></div>
<div class="b" style="left:611px;top:181px;width:1px;height:18px;background:#000"></div>
<div class="b" style="left:713px;top:181px;width:1px;height:18px;background:#000"></div>
<div class="b" style="left:815px;top:181px;width:1px;height:18px;background:#000"></div>
<div class="b" style="left:917px;top:181px;width:1px;height:18px;background:#000"></div>
<div class="b" style="left:1019px;top:181px;width:1px;height:18px;background:#000"></div>
<div class="b" style="left:1121px;top:181px;width:1px;height:18px;background:#000"></div>
<div class="t" style="left:3.50px;top:184.84px;font-size:14.6px;color:#000;letter-spacing:0.6px;">10</div>
<div class="t" style="left:104.50px;top:185.35px;font-size:14.0px;color:#000;">NZ</div>
<div class="t" style="left:206.50px;top:185.35px;font-size:14.0px;color:#000;">ABAZ</div>
<div class="t" style="left:308.50px;top:185.35px;font-size:14.0px;color:#000;">EHN</div>
<div class="t" style="left:410.50px;top:185.35px;font-size:14.0px;color:#000;letter-spacing:0.2px;">/home/kaspe...</div>
<div class="t" style="left:512.50px;top:185.35px;font-size:14.0px;color:#000;letter-spacing:-0.15px;">ABAZ.NZ..EH...</div>
<div class="t" style="left:614.50px;top:184.84px;font-size:14.6px;color:#000;letter-spacing:0.6px;">2014-04-13...</div>
<div class="t" style="left:716.50px;top:184.84px;font-size:14.6px;color:#000;letter-spacing:0.6px;">2014-04-13...</div>
<div class="t" style="left:818.50px;top:184.84px;font-size:14.6px;color:#000;letter-spacing:0.6px;">86400</div>
<div class="t" style="left:920.50px;top:184.84px;font-size:14.6px;color:#000;letter-spacing:0.6px;">0</div>
<div class="t" style="left:1022.50px;top:184.84px;font-size:14.6px;color:#000;letter-spacing:0.6px;">100</div>
<div class="t" style="left:1124.50px;top:185.35px;font-size:14.0px;color:#000;">A</div>
<div class="b" style="left:0;top:201px;width:101px;height:18px;background:#ccffcc"></div>
<div class="b" style="left:101px;top:201px;width:714px;height:18px;background:#ccffff"></div>
<div class="b" style="left:815px;top:201px;width:306px;height:18px;background:#66ff66"></div>
<div class="b" style="left:1121px;top:201px;width:96px;height:18px;background:#ccffff"></div>
<div class="b" style="left:0;top:220px;width:1217px;height:1px;background:#ebebeb"></div>
<div class="b" style="left:101px;top:201px;width:1px;height:18px;background:#000"></div>
<div class="b" style="left:203px;top:201px;width:1px;height:18px;background:#000"></div>
<div class="b" style="left:305px;top:201px;width:1px;height:18px;background:#000"></div>
<div class="b" style="left:407px;top:201px;width:1px;height:18px;background:#000"></div>
<div class="b" style="left:509px;top:201px;width:1px;height:18px;background:#000"></div>
<div class="b" style="left:611px;top:201px;width:1px;height:18px;background:#000"></div>
<div class="b" style="left:713px;top:201px;width:1px;height:18px;background:#000"></div>
<div class="b" style="left:815px;top:201px;width:1px;height:18px;background:#000"></div>
<div class="b" style="left:917px;top:201px;width:1px;height:18px;background:#000"></div>
<div class="b" style="left:1019px;top:201px;width:1px;height:18px;background:#000"></div>
<div class="b" style="left:1121px;top:201px;width:1px;height:18px;background:#000"></div>
<div class="t" style="left:3.50px;top:204.84px;font-size:14.6px;color:#000;letter-spacing:0.6px;">11</div>
<div class="t" style="left:104.50px;top:205.35px;font-size:14.0px;color:#000;">NZ</div>
<div class="t" style="left:206.50px;top:205.35px;font-size:14.0px;color:#000;">ABAZ</div>
<div class="t" style="left:308.50px;top:205.35px;font-size:14.0px;color:#000;">EHE</div>
<div class="t" style="left:410.50px;top:205.35px;font-size:14.0px;color:#000;letter-spacing:0.2px;">/home/kaspe...</div>
<div class="t" style="left:512.50px;top:205.35px;font-size:14.0px;color:#000;letter-spacing:-0.15px;">ABAZ.NZ..EH...</div>
<div class="t" style="left:614.50px;top:204.84px;font-size:14.6px;color:#000;letter-spacing:0.6px;">2014-04-12...</div>
<div class="t" style="left:716.50px;top:204.84px;font-size:14.6px;color:#000;letter-spacing:0.6px;">2014-04-12...</div>
<div class="t" style="left:818.50px;top:204.84px;font-size:14.6px;color:#000;letter-spacing:0.6px;">86400</div>
<div class="t" style="left:920.50px;top:204.84px;font-size:14.6px;color:#000;letter-spacing:0.6px;">0</div>
<div class="t" style="left:1022.50px;top:204.84px;font-size:14.6px;color:#000;letter-spacing:0.6px;">100</div>
<div class="t" style="left:1124.50px;top:205.35px;font-size:14.0px;color:#000;">A</div>
<div class="b" style="left:0;top:221px;width:101px;height:18px;background:#ccffcc"></div>
<div class="b" style="left:101px;top:221px;width:714px;height:18px;background:#ccffff"></div>
<div class="b" style="left:815px;top:221px;width:306px;height:18px;background:#66ff66"></div>
<div class="b" style="left:1121px;top:221px;width:96px;height:18px;background:#ccffff"></div>
<div class="b" style="left:0;top:240px;width:1217px;height:1px;background:#ebebeb"></div>
<div class="b" style="left:101px;top:221px;width:1px;height:18px;background:#000"></div>
<div class="b" style="left:203px;top:221px;width:1px;height:18px;background:#000"></div>
<div class="b" style="left:305px;top:221px;width:1px;height:18px;background:#000"></div>
<div class="b" style="left:407px;top:221px;width:1px;height:18px;background:#000"></div>
<div class="b" style="left:509px;top:221px;width:1px;height:18px;background:#000"></div>
<div class="b" style="left:611px;top:221px;width:1px;height:18px;background:#000"></div>
<div class="b" style="left:713px;top:221px;width:1px;height:18px;background:#000"></div>
<div class="b" style="left:815px;top:221px;width:1px;height:18px;background:#000"></div>
<div class="b" style="left:917px;top:221px;width:1px;height:18px;background:#000"></div>
<div class="b" style="left:1019px;top:221px;width:1px;height:18px;background:#000"></div>
<div class="b" style="left:1121px;top:221px;width:1px;height:18px;background:#000"></div>
<div class="t" style="left:3.50px;top:224.84px;font-size:14.6px;color:#000;letter-spacing:0.6px;">12</div>
<div class="t" style="left:104.50px;top:225.35px;font-size:14.0px;color:#000;">NZ</div>
<div class="t" style="left:206.50px;top:225.35px;font-size:14.0px;color:#000;">ABAZ</div>
<div class="t" style="left:308.50px;top:225.35px;font-size:14.0px;color:#000;">VEC</div>
<div class="t" style="left:410.50px;top:225.35px;font-size:14.0px;color:#000;letter-spacing:0.2px;">/home/kaspe...</div>
<div class="t" style="left:512.50px;top:225.35px;font-size:14.0px;color:#000;letter-spacing:-0.15px;">ABAZ.NZ..VE...</div>
<div class="t" style="left:614.50px;top:224.84px;font-size:14.6px;color:#000;letter-spacing:0.6px;">2014-04-14...</div>
<div class="t" style="left:716.50px;top:224.84px;font-size:14.6px;color:#000;letter-spacing:0.6px;">2014-04-14...</div>
<div class="t" style="left:818.50px;top:224.84px;font-size:14.6px;color:#000;letter-spacing:0.6px;">85290</div>
<div class="t" style="left:920.50px;top:224.84px;font-size:14.6px;color:#000;letter-spacing:0.6px;">0</div>
<div class="t" style="left:1022.50px;top:224.84px;font-size:14.6px;color:#000;letter-spacing:0.6px;">0.1</div>
<div class="t" style="left:1124.50px;top:225.35px;font-size:14.0px;color:#000;">A</div>
<div class="b" style="left:0;top:241px;width:101px;height:18px;background:#ccffcc"></div>
<div class="b" style="left:101px;top:241px;width:714px;height:18px;background:#ccffff"></div>
<div class="b" style="left:815px;top:241px;width:306px;height:18px;background:#66ff66"></div>
<div class="b" style="left:1121px;top:241px;width:96px;height:18px;background:#ccffff"></div>
<div class="b" style="left:0;top:260px;width:1217px;height:1px;background:#ebebeb"></div>
<div class="b" style="left:101px;top:241px;width:1px;height:18px;background:#000"></div>
<div class="b" style="left:203px;top:241px;width:1px;height:18px;background:#000"></div>
<div class="b" style="left:305px;top:241px;width:1px;height:18px;background:#000"></div>
<div class="b" style="left:407px;top:241px;width:1px;height:18px;background:#000"></div>
<div class="b" style="left:509px;top:241px;width:1px;height:18px;background:#000"></div>
<div class="b" style="left:611px;top:241px;width:1px;height:18px;background:#000"></div>
<div class="b" style="left:713px;top:241px;width:1px;height:18px;background:#000"></div>
<div class="b" style="left:815px;top:241px;width:1px;height:18px;background:#000"></div>
<div class="b" style="left:917px;top:241px;width:1px;height:18px;background:#000"></div>
<div class="b" style="left:1019px;top:241px;width:1px;height:18px;background:#000"></div>
<div class="b" style="left:1121px;top:241px;width:1px;height:18px;background:#000"></div>
<div class="t" style="left:3.50px;top:244.84px;font-size:14.6px;color:#000;letter-spacing:0.6px;">13</div>
<div class="t" style="left:104.50px;top:245.35px;font-size:14.0px;color:#000;">NZ</div>
<div class="t" style="left:206.50px;top:245.35px;font-size:14.0px;color:#000;">ABAZ</div>
<div class="t" style="left:308.50px;top:245.35px;font-size:14.0px;color:#000;">VEM</div>
<div class="t" style="left:410.50px;top:245.35px;font-size:14.0px;color:#000;letter-spacing:0.2px;">/home/kaspe...</div>
<div class="t" style="left:512.50px;top:245.35px;font-size:14.0px;color:#000;letter-spacing:-0.15px;">ABAZ.NZ..VE...</div>
<div class="t" style="left:614.50px;top:244.84px;font-size:14.6px;color:#000;letter-spacing:0.6px;">2014-04-12...</div>
<div class="t" style="left:716.50px;top:244.84px;font-size:14.6px;color:#000;letter-spacing:0.6px;">2014-04-12...</div>
<div class="t" style="left:818.50px;top:244.84px;font-size:14.6px;color:#000;letter-spacing:0.6px;">86400</div>
<div class="t" style="left:920.50px;top:244.84px;font-size:14.6px;color:#000;letter-spacing:0.6px;">0</div>
<div class="t" style="left:1022.50px;top:244.84px;font-size:14.6px;color:#000;letter-spacing:0.6px;">0.1</div>
<div class="t" style="left:1124.50px;top:245.35px;font-size:14.0px;color:#000;">A</div>
<div class="b" style="left:0;top:261px;width:101px;height:18px;background:#ccffcc"></div>
<div class="b" style="left:101px;top:261px;width:714px;height:18px;background:#ccffff"></div>
<div class="b" style="left:815px;top:261px;width:306px;height:18px;background:#66ff66"></div>
<div class="b" style="left:1121px;top:261px;width:96px;height:18px;background:#ccffff"></div>
<div class="b" style="left:0;top:280px;width:1217px;height:1px;background:#ebebeb"></div>
<div class="b" style="left:101px;top:261px;width:1px;height:18px;background:#000"></div>
<div class="b" style="left:203px;top:261px;width:1px;height:18px;background:#000"></div>
<div class="b" style="left:305px;top:261px;width:1px;height:18px;background:#000"></div>
<div class="b" style="left:407px;top:261px;width:1px;height:18px;background:#000"></div>
<div class="b" style="left:509px;top:261px;width:1px;height:18px;background:#000"></div>
<div class="b" style="left:611px;top:261px;width:1px;height:18px;background:#000"></div>
<div class="b" style="left:713px;top:261px;width:1px;height:18px;background:#000"></div>
<div class="b" style="left:815px;top:261px;width:1px;height:18px;background:#000"></div>
<div class="b" style="left:917px;top:261px;width:1px;height:18px;background:#000"></div>
<div class="b" style="left:1019px;top:261px;width:1px;height:18px;background:#000"></div>
<div class="b" style="left:1121px;top:261px;width:1px;height:18px;background:#000"></div>
<div class="t" style="left:3.50px;top:264.84px;font-size:14.6px;color:#000;letter-spacing:0.6px;">14</div>
<div class="t" style="left:104.50px;top:265.35px;font-size:14.0px;color:#000;">NZ</div>
<div class="t" style="left:206.50px;top:265.35px;font-size:14.0px;color:#000;">ABAZ</div>
<div class="t" style="left:308.50px;top:265.35px;font-size:14.0px;color:#000;">EHZ</div>
<div class="t" style="left:410.50px;top:265.35px;font-size:14.0px;color:#000;letter-spacing:0.2px;">/home/kaspe...</div>
<div class="t" style="left:512.50px;top:265.35px;font-size:14.0px;color:#000;letter-spacing:-0.15px;">ABAZ.NZ..EH...</div>
<div class="t" style="left:614.50px;top:264.84px;font-size:14.6px;color:#000;letter-spacing:0.6px;">2014-04-14...</div>
<div class="t" style="left:716.50px;top:264.84px;font-size:14.6px;color:#000;letter-spacing:0.6px;">2014-04-14...</div>
<div class="t" style="left:818.50px;top:264.84px;font-size:14.6px;color:#000;letter-spacing:0.6px;">85589.03</div>
<div class="t" style="left:920.50px;top:264.84px;font-size:14.6px;color:#000;letter-spacing:0.6px;">0</div>
<div class="t" style="left:1022.50px;top:264.84px;font-size:14.6px;color:#000;letter-spacing:0.6px;">100</div>
<div class="t" style="left:1124.50px;top:265.35px;font-size:14.0px;color:#000;">A</div>
<div class="b" style="left:0;top:281px;width:101px;height:18px;background:#ccffcc"></div>
<div class="b" style="left:101px;top:281px;width:714px;height:18px;background:#ccffff"></div>
<div class="b" style="left:815px;top:281px;width:306px;height:18px;background:#66ff66"></div>
<div class="b" style="left:1121px;top:281px;width:96px;height:18px;background:#ccffff"></div>
<div class="b" style="left:0;top:300px;width:1217px;height:1px;background:#ebebeb"></div>
<div class="b" style="left:101px;top:281px;width:1px;height:18px;background:#000"></div>
<div class="b" style="left:203px;top:281px;width:1px;height:18px;background:#000"></div>
<div class="b" style="left:305px;top:281px;width:1px;height:18px;background:#000"></div>
<div class="b" style="left:407px;top:281px;width:1px;height:18px;background:#000"></div>
<div class="b" style="left:509px;top:281px;width:1px;height:18px;background:#000"></div>
<div class="b" style="left:611px;top:281px;width:1px;height:18px;background:#000"></div>
<div class="b" style="left:713px;top:281px;width:1px;height:18px;background:#000"></div>
<div class="b" style="left:815px;top:281px;width:1px;height:18px;background:#000"></div>
<div class="b" style="left:917px;top:281px;width:1px;height:18px;background:#000"></div>
<div class="b" style="left:1019px;top:281px;width:1px;height:18px;background:#000"></div>
<div class="b" style="left:1121px;top:281px;width:1px;height:18px;background:#000"></div>
<div class="t" style="left:3.50px;top:284.84px;font-size:14.6px;color:#000;letter-spacing:0.6px;">15</div>
<div class="t" style="left:104.50px;top:285.35px;font-size:14.0px;color:#000;">NZ</div>
<div class="t" style="left:206.50px;top:285.35px;font-size:14.0px;color:#000;">ABAZ</div>
<div class="t" style="left:308.50px;top:285.35px;font-size:14.0px;color:#000;">EHE</div>
<div class="t" style="left:410.50px;top:285.35px;font-size:14.0px;color:#000;letter-spacing:0.2px;">/home/kaspe...</div>
<div class="t" style="left:512.50px;top:285.35px;font-size:14.0px;color:#000;letter-spacing:-0.15px;">ABAZ.NZ..EH...</div>
<div class="t" style="left:614.50px;top:284.84px;font-size:14.6px;color:#000;letter-spacing:0.6px;">2014-04-14...</div>
<div class="t" style="left:716.50px;top:284.84px;font-size:14.6px;color:#000;letter-spacing:0.6px;">2014-04-14...</div>
<div class="t" style="left:818.50px;top:284.84px;font-size:14.6px;color:#000;letter-spacing:0.6px;">85568.32</div>
<div class="t" style="left:920.50px;top:284.84px;font-size:14.6px;color:#000;letter-spacing:0.6px;">0</div>
<div class="t" style="left:1022.50px;top:284.84px;font-size:14.6px;color:#000;letter-spacing:0.6px;">100</div>
<div class="t" style="left:1124.50px;top:285.35px;font-size:14.0px;color:#000;">A</div>
<div class="b" style="left:0;top:301px;width:101px;height:18px;background:#ccffcc"></div>
<div class="b" style="left:101px;top:301px;width:714px;height:18px;background:#ccffff"></div>
<div class="b" style="left:815px;top:301px;width:306px;height:18px;background:#66ff66"></div>
<div class="b" style="left:1121px;top:301px;width:96px;height:18px;background:#ccffff"></div>
<div class="b" style="left:0;top:320px;width:1217px;height:1px;background:#ebebeb"></div>
<div class="b" style="left:101px;top:301px;width:1px;height:18px;background:#000"></div>
<div class="b" style="left:203px;top:301px;width:1px;height:18px;background:#000"></div>
<div class="b" style="left:305px;top:301px;width:1px;height:18px;background:#000"></div>
<div class="b" style="left:407px;top:301px;width:1px;height:18px;background:#000"></div>
<div class="b" style="left:509px;top:301px;width:1px;height:18px;background:#000"></div>
<div class="b" style="left:611px;top:301px;width:1px;height:18px;background:#000"></div>
<div class="b" style="left:713px;top:301px;width:1px;height:18px;background:#000"></div>
<div class="b" style="left:815px;top:301px;width:1px;height:18px;background:#000"></div>
<div class="b" style="left:917px;top:301px;width:1px;height:18px;background:#000"></div>
<div class="b" style="left:1019px;top:301px;width:1px;height:18px;background:#000"></div>
<div class="b" style="left:1121px;top:301px;width:1px;height:18px;background:#000"></div>
<div class="t" style="left:3.50px;top:304.84px;font-size:14.6px;color:#000;letter-spacing:0.6px;">16</div>
<div class="t" style="left:104.50px;top:305.35px;font-size:14.0px;color:#000;">NZ</div>
<div class="t" style="left:206.50px;top:305.35px;font-size:14.0px;color:#000;">ABAZ</div>
<div class="t" style="left:308.50px;top:305.35px;font-size:14.0px;color:#000;">VEM</div>
<div class="t" style="left:410.50px;top:305.35px;font-size:14.0px;color:#000;letter-spacing:0.2px;">/home/kaspe...</div>
<div class="t" style="left:512.50px;top:305.35px;font-size:14.0px;color:#000;letter-spacing:-0.15px;">ABAZ.NZ..VE...</div>
<div class="t" style="left:614.50px;top:304.84px;font-size:14.6px;color:#000;letter-spacing:0.6px;">2014-04-13...</div>
<div class="t" style="left:716.50px;top:304.84px;font-size:14.6px;color:#000;letter-spacing:0.6px;">2014-04-13...</div>
<div class="t" style="left:818.50px;top:304.84px;font-size:14.6px;color:#000;letter-spacing:0.6px;">86400</div>
<div class="t" style="left:920.50px;top:304.84px;font-size:14.6px;color:#000;letter-spacing:0.6px;">0</div>
<div class="t" style="left:1022.50px;top:304.84px;font-size:14.6px;color:#000;letter-spacing:0.6px;">0.1</div>
<div class="t" style="left:1124.50px;top:305.35px;font-size:14.0px;color:#000;">A</div>
<div class="b" style="left:0;top:321px;width:101px;height:18px;background:#ccffcc"></div>
<div class="b" style="left:101px;top:321px;width:714px;height:18px;background:#ccffff"></div>
<div class="b" style="left:815px;top:321px;width:306px;height:18px;background:#66ff66"></div>
<div class="b" style="left:1121px;top:321px;width:96px;height:18px;background:#ccffff"></div>
<div class="b" style="left:0;top:340px;width:1217px;height:1px;background:#ebebeb"></div>
<div class="b" style="left:101px;top:321px;width:1px;height:18px;background:#000"></div>
<div class="b" style="left:203px;top:321px;width:1px;height:18px;background:#000"></div>
<div class="b" style="left:305px;top:321px;width:1px;height:18px;background:#000"></div>
<div class="b" style="left:407px;top:321px;width:1px;height:18px;background:#000"></div>
<div class="b" style="left:509px;top:321px;width:1px;height:18px;background:#000"></div>
<div class="b" style="left:611px;top:321px;width:1px;height:18px;background:#000"></div>
<div class="b" style="left:713px;top:321px;width:1px;height:18px;background:#000"></div>
<div class="b" style="left:815px;top:321px;width:1px;height:18px;background:#000"></div>
<div class="b" style="left:917px;top:321px;width:1px;height:18px;background:#000"></div>
<div class="b" style="left:1019px;top:321px;width:1px;height:18px;background:#000"></div>
<div class="b" style="left:1121px;top:321px;width:1px;height:18px;background:#000"></div>
<div class="t" style="left:3.50px;top:324.84px;font-size:14.6px;color:#000;letter-spacing:0.6px;">17</div>
<div class="t" style="left:104.50px;top:325.35px;font-size:14.0px;color:#000;">NZ</div>
<div class="t" style="left:206.50px;top:325.35px;font-size:14.0px;color:#000;">ABAZ</div>
<div class="t" style="left:308.50px;top:325.35px;font-size:14.0px;color:#000;">EHN</div>
<div class="t" style="left:410.50px;top:325.35px;font-size:14.0px;color:#000;letter-spacing:0.2px;">/home/kaspe...</div>
<div class="t" style="left:512.50px;top:325.35px;font-size:14.0px;color:#000;letter-spacing:-0.15px;">ABAZ.NZ..EH...</div>
<div class="t" style="left:614.50px;top:324.84px;font-size:14.6px;color:#000;letter-spacing:0.6px;">2014-04-12...</div>
<div class="t" style="left:716.50px;top:324.84px;font-size:14.6px;color:#000;letter-spacing:0.6px;">2014-04-12...</div>
<div class="t" style="left:818.50px;top:324.84px;font-size:14.6px;color:#000;letter-spacing:0.6px;">86400</div>
<div class="t" style="left:920.50px;top:324.84px;font-size:14.6px;color:#000;letter-spacing:0.6px;">0</div>
<div class="t" style="left:1022.50px;top:324.84px;font-size:14.6px;color:#000;letter-spacing:0.6px;">100</div>
<div class="t" style="left:1124.50px;top:325.35px;font-size:14.0px;color:#000;">A</div>
<div class="b" style="left:0;top:341px;width:101px;height:18px;background:#ccffcc"></div>
<div class="b" style="left:101px;top:341px;width:714px;height:18px;background:#ccffff"></div>
<div class="b" style="left:815px;top:341px;width:306px;height:18px;background:#66ff66"></div>
<div class="b" style="left:1121px;top:341px;width:96px;height:18px;background:#ccffff"></div>
<div class="b" style="left:0;top:360px;width:1217px;height:1px;background:#ebebeb"></div>
<div class="b" style="left:101px;top:341px;width:1px;height:18px;background:#000"></div>
<div class="b" style="left:203px;top:341px;width:1px;height:18px;background:#000"></div>
<div class="b" style="left:305px;top:341px;width:1px;height:18px;background:#000"></div>
<div class="b" style="left:407px;top:341px;width:1px;height:18px;background:#000"></div>
<div class="b" style="left:509px;top:341px;width:1px;height:18px;background:#000"></div>
<div class="b" style="left:611px;top:341px;width:1px;height:18px;background:#000"></div>
<div class="b" style="left:713px;top:341px;width:1px;height:18px;background:#000"></div>
<div class="b" style="left:815px;top:341px;width:1px;height:18px;background:#000"></div>
<div class="b" style="left:917px;top:341px;width:1px;height:18px;background:#000"></div>
<div class="b" style="left:1019px;top:341px;width:1px;height:18px;background:#000"></div>
<div class="b" style="left:1121px;top:341px;width:1px;height:18px;background:#000"></div>
<div class="t" style="left:3.50px;top:344.84px;font-size:14.6px;color:#000;letter-spacing:0.6px;">18</div>
<div class="t" style="left:104.50px;top:345.35px;font-size:14.0px;color:#000;">NZ</div>
<div class="t" style="left:206.50px;top:345.35px;font-size:14.0px;color:#000;">ABAZ</div>
<div class="t" style="left:308.50px;top:345.35px;font-size:14.0px;color:#000;">EHE</div>
<div class="t" style="left:410.50px;top:345.35px;font-size:14.0px;color:#000;letter-spacing:0.2px;">/home/kaspe...</div>
<div class="t" style="left:512.50px;top:345.35px;font-size:14.0px;color:#000;letter-spacing:-0.15px;">ABAZ.NZ..EH...</div>
<div class="t" style="left:614.50px;top:344.84px;font-size:14.6px;color:#000;letter-spacing:0.6px;">2014-04-13...</div>
<div class="t" style="left:716.50px;top:344.84px;font-size:14.6px;color:#000;letter-spacing:0.6px;">2014-04-13...</div>
<div class="t" style="left:818.50px;top:344.84px;font-size:14.6px;color:#000;letter-spacing:0.6px;">86400</div>
<div class="t" style="left:920.50px;top:344.84px;font-size:14.6px;color:#000;letter-spacing:0.6px;">0</div>
<div class="t" style="left:1022.50px;top:344.84px;font-size:14.6px;color:#000;letter-spacing:0.6px;">100</div>
<div class="t" style="left:1124.50px;top:345.35px;font-size:14.0px;color:#000;">A</div>
<div class="b" style="left:0;top:361px;width:101px;height:18px;background:#ccffcc"></div>
<div class="b" style="left:101px;top:361px;width:714px;height:18px;background:#ccffff"></div>
<div class="b" style="left:815px;top:361px;width:306px;height:18px;background:#66ff66"></div>
<div class="b" style="left:1121px;top:361px;width:96px;height:18px;background:#ccffff"></div>
<div class="b" style="left:0;top:380px;width:1217px;height:1px;background:#ebebeb"></div>
<div class="b" style="left:101px;top:361px;width:1px;height:18px;background:#000"></div>
<div class="b" style="left:203px;top:361px;width:1px;height:18px;background:#000"></div>
<div class="b" style="left:305px;top:361px;width:1px;height:18px;background:#000"></div>
<div class="b" style="left:407px;top:361px;width:1px;height:18px;background:#000"></div>
<div class="b" style="left:509px;top:361px;width:1px;height:18px;background:#000"></div>
<div class="b" style="left:611px;top:361px;width:1px;height:18px;background:#000"></div>
<div class="b" style="left:713px;top:361px;width:1px;height:18px;background:#000"></div>
<div class="b" style="left:815px;top:361px;width:1px;height:18px;background:#000"></div>
<div class="b" style="left:917px;top:361px;width:1px;height:18px;background:#000"></div>
<div class="b" style="left:1019px;top:361px;width:1px;height:18px;background:#000"></div>
<div class="b" style="left:1121px;top:361px;width:1px;height:18px;background:#000"></div>
<div class="t" style="left:3.50px;top:364.84px;font-size:14.6px;color:#000;letter-spacing:0.6px;">19</div>
<div class="t" style="left:104.50px;top:365.35px;font-size:14.0px;color:#000;">NZ</div>
<div class="t" style="left:206.50px;top:365.35px;font-size:14.0px;color:#000;">ABAZ</div>
<div class="t" style="left:308.50px;top:365.35px;font-size:14.0px;color:#000;">VKI</div>
<div class="t" style="left:410.50px;top:365.35px;font-size:14.0px;color:#000;letter-spacing:0.2px;">/home/kaspe...</div>
<div class="t" style="left:512.50px;top:365.35px;font-size:14.0px;color:#000;letter-spacing:-0.15px;">ABAZ.NZ..VK...</div>
<div class="t" style="left:614.50px;top:364.84px;font-size:14.6px;color:#000;letter-spacing:0.6px;">2014-04-13...</div>
<div class="t" style="left:716.50px;top:364.84px;font-size:14.6px;color:#000;letter-spacing:0.6px;">2014-04-13...</div>
<div class="t" style="left:818.50px;top:364.84px;font-size:14.6px;color:#000;letter-spacing:0.6px;">86400</div>
<div class="t" style="left:920.50px;top:364.84px;font-size:14.6px;color:#000;letter-spacing:0.6px;">0</div>
<div class="t" style="left:1022.50px;top:364.84px;font-size:14.6px;color:#000;letter-spacing:0.6px;">0.1</div>
<div class="t" style="left:1124.50px;top:365.35px;font-size:14.0px;color:#000;">A</div>
<div class="b" style="left:0;top:381px;width:101px;height:18px;background:#ccffcc"></div>
<div class="b" style="left:101px;top:381px;width:714px;height:18px;background:#ccffff"></div>
<div class="b" style="left:815px;top:381px;width:306px;height:18px;background:#66ff66"></div>
<div class="b" style="left:1121px;top:381px;width:96px;height:18px;background:#ccffff"></div>
<div class="b" style="left:0;top:400px;width:1217px;height:1px;background:#ebebeb"></div>
<div class="b" style="left:101px;top:381px;width:1px;height:18px;background:#000"></div>
<div class="b" style="left:203px;top:381px;width:1px;height:18px;background:#000"></div>
<div class="b" style="left:305px;top:381px;width:1px;height:18px;background:#000"></div>
<div class="b" style="left:407px;top:381px;width:1px;height:18px;background:#000"></div>
<div class="b" style="left:509px;top:381px;width:1px;height:18px;background:#000"></div>
<div class="b" style="left:611px;top:381px;width:1px;height:18px;background:#000"></div>
<div class="b" style="left:713px;top:381px;width:1px;height:18px;background:#000"></div>
<div class="b" style="left:815px;top:381px;width:1px;height:18px;background:#000"></div>
<div class="b" style="left:917px;top:381px;width:1px;height:18px;background:#000"></div>
<div class="b" style="left:1019px;top:381px;width:1px;height:18px;background:#000"></div>
<div class="b" style="left:1121px;top:381px;width:1px;height:18px;background:#000"></div>
<div class="t" style="left:3.50px;top:384.84px;font-size:14.6px;color:#000;letter-spacing:0.6px;">20</div>
<div class="t" style="left:104.50px;top:385.35px;font-size:14.0px;color:#000;">NZ</div>
<div class="t" style="left:206.50px;top:385.35px;font-size:14.0px;color:#000;">ABAZ</div>
<div class="t" style="left:308.50px;top:385.35px;font-size:14.0px;color:#000;">VEC</div>
<div class="t" style="left:410.50px;top:385.35px;font-size:14.0px;color:#000;letter-spacing:0.2px;">/home/kaspe...</div>
<div class="t" style="left:512.50px;top:385.35px;font-size:14.0px;color:#000;letter-spacing:-0.15px;">ABAZ.NZ..VE...</div>
<div class="t" style="left:614.50px;top:384.84px;font-size:14.6px;color:#000;letter-spacing:0.6px;">2014-04-13...</div>
<div class="t" style="left:716.50px;top:384.84px;font-size:14.6px;color:#000;letter-spacing:0.6px;">2014-04-13...</div>
<div class="t" style="left:818.50px;top:384.84px;font-size:14.6px;color:#000;letter-spacing:0.6px;">86400</div>
<div class="t" style="left:920.50px;top:384.84px;font-size:14.6px;color:#000;letter-spacing:0.6px;">0</div>
<div class="t" style="left:1022.50px;top:384.84px;font-size:14.6px;color:#000;letter-spacing:0.6px;">0.1</div>
<div class="t" style="left:1124.50px;top:385.35px;font-size:14.0px;color:#000;">A</div>
<div class="b" style="left:0;top:401px;width:101px;height:18px;background:#ccffcc"></div>
<div class="b" style="left:101px;top:401px;width:714px;height:18px;background:#ccffff"></div>
<div class="b" style="left:815px;top:401px;width:306px;height:18px;background:#66ff66"></div>
<div class="b" style="left:1121px;top:401px;width:96px;height:18px;background:#ccffff"></div>
<div class="b" style="left:0;top:420px;width:1217px;height:1px;background:#ebebeb"></div>
<div class="b" style="left:101px;top:401px;width:1px;height:18px;background:#000"></div>
<div class="b" style="left:203px;top:401px;width:1px;height:18px;background:#000"></div>
<div class="b" style="left:305px;top:401px;width:1px;height:18px;background:#000"></div>
<div class="b" style="left:407px;top:401px;width:1px;height:18px;background:#000"></div>
<div class="b" style="left:509px;top:401px;width:1px;height:18px;background:#000"></div>
<div class="b" style="left:611px;top:401px;width:1px;height:18px;background:#000"></div>
<div class="b" style="left:713px;top:401px;width:1px;height:18px;background:#000"></div>
<div class="b" style="left:815px;top:401px;width:1px;height:18px;background:#000"></div>
<div class="b" style="left:917px;top:401px;width:1px;height:18px;background:#000"></div>
<div class="b" style="left:1019px;top:401px;width:1px;height:18px;background:#000"></div>
<div class="b" style="left:1121px;top:401px;width:1px;height:18px;background:#000"></div>
<div class="t" style="left:3.50px;top:404.84px;font-size:14.6px;color:#000;letter-spacing:0.6px;">21</div>
<div class="t" style="left:104.50px;top:405.35px;font-size:14.0px;color:#000;">NZ</div>
<div class="t" style="left:206.50px;top:405.35px;font-size:14.0px;color:#000;">ABAZ</div>
<div class="t" style="left:308.50px;top:405.35px;font-size:14.0px;color:#000;">VEC</div>
<div class="t" style="left:410.50px;top:405.35px;font-size:14.0px;color:#000;letter-spacing:0.2px;">/home/kaspe...</div>
<div class="t" style="left:512.50px;top:405.35px;font-size:14.0px;color:#000;letter-spacing:-0.15px;">ABAZ.NZ..VE...</div>
<div class="t" style="left:614.50px;top:404.84px;font-size:14.6px;color:#000;letter-spacing:0.6px;">2014-04-12...</div>
<div class="t" style="left:716.50px;top:404.84px;font-size:14.6px;color:#000;letter-spacing:0.6px;">2014-04-12...</div>
<div class="t" style="left:818.50px;top:404.84px;font-size:14.6px;color:#000;letter-spacing:0.6px;">86400</div>
<div class="t" style="left:920.50px;top:404.84px;font-size:14.6px;color:#000;letter-spacing:0.6px;">0</div>
<div class="t" style="left:1022.50px;top:404.84px;font-size:14.6px;color:#000;letter-spacing:0.6px;">0.1</div>
<div class="t" style="left:1124.50px;top:405.35px;font-size:14.0px;color:#000;">A</div>
<div class="b" style="left:0;top:421px;width:101px;height:18px;background:#ccffcc"></div>
<div class="b" style="left:101px;top:421px;width:714px;height:18px;background:#ccffff"></div>
<div class="b" style="left:815px;top:421px;width:306px;height:18px;background:#66ff66"></div>
<div class="b" style="left:1121px;top:421px;width:96px;height:18px;background:#ccffff"></div>
<div class="b" style="left:0;top:440px;width:1217px;height:1px;background:#ebebeb"></div>
<div class="b" style="left:101px;top:421px;width:1px;height:18px;background:#000"></div>
<div class="b" style="left:203px;top:421px;width:1px;height:18px;background:#000"></div>
<div class="b" style="left:305px;top:421px;width:1px;height:18px;background:#000"></div>
<div class="b" style="left:407px;top:421px;width:1px;height:18px;background:#000"></div>
<div class="b" style="left:509px;top:421px;width:1px;height:18px;background:#000"></div>
<div class="b" style="left:611px;top:421px;width:1px;height:18px;background:#000"></div>
<div class="b" style="left:713px;top:421px;width:1px;height:18px;background:#000"></div>
<div class="b" style="left:815px;top:421px;width:1px;height:18px;background:#000"></div>
<div class="b" style="left:917px;top:421px;width:1px;height:18px;background:#000"></div>
<div class="b" style="left:1019px;top:421px;width:1px;height:18px;background:#000"></div>
<div class="b" style="left:1121px;top:421px;width:1px;height:18px;background:#000"></div>
<div class="t" style="left:3.50px;top:424.84px;font-size:14.6px;color:#000;letter-spacing:0.6px;">22</div>
<div class="t" style="left:104.50px;top:425.35px;font-size:14.0px;color:#000;">NZ</div>
<div class="t" style="left:206.50px;top:425.35px;font-size:14.0px;color:#000;">ABAZ</div>
<div class="t" style="left:308.50px;top:425.35px;font-size:14.0px;color:#000;">VKI</div>
<div class="t" style="left:410.50px;top:425.35px;font-size:14.0px;color:#000;letter-spacing:0.2px;">/home/kaspe...</div>
<div class="t" style="left:512.50px;top:425.35px;font-size:14.0px;color:#000;letter-spacing:-0.15px;">ABAZ.NZ..VK...</div>
<div class="t" style="left:614.50px;top:424.84px;font-size:14.6px;color:#000;letter-spacing:0.6px;">2014-04-14...</div>
<div class="t" style="left:716.50px;top:424.84px;font-size:14.6px;color:#000;letter-spacing:0.6px;">2014-04-14...</div>
<div class="t" style="left:818.50px;top:424.84px;font-size:14.6px;color:#000;letter-spacing:0.6px;">85240</div>
<div class="t" style="left:920.50px;top:424.84px;font-size:14.6px;color:#000;letter-spacing:0.6px;">0</div>
<div class="t" style="left:1022.50px;top:424.84px;font-size:14.6px;color:#000;letter-spacing:0.6px;">0.1</div>
<div class="t" style="left:1124.50px;top:425.35px;font-size:14.0px;color:#000;">A</div>
<div class="b" style="left:0;top:441px;width:101px;height:18px;background:#ccffcc"></div>
<div class="b" style="left:101px;top:441px;width:714px;height:18px;background:#ccffff"></div>
<div class="b" style="left:815px;top:441px;width:306px;height:18px;background:#66ff66"></div>
<div class="b" style="left:1121px;top:441px;width:96px;height:18px;background:#ccffff"></div>
<div class="b" style="left:0;top:460px;width:1217px;height:1px;background:#ebebeb"></div>
<div class="b" style="left:101px;top:441px;width:1px;height:18px;background:#000"></div>
<div class="b" style="left:203px;top:441px;width:1px;height:18px;background:#000"></div>
<div class="b" style="left:305px;top:441px;width:1px;height:18px;background:#000"></div>
<div class="b" style="left:407px;top:441px;width:1px;height:18px;background:#000"></div>
<div class="b" style="left:509px;top:441px;width:1px;height:18px;background:#000"></div>
<div class="b" style="left:611px;top:441px;width:1px;height:18px;background:#000"></div>
<div class="b" style="left:713px;top:441px;width:1px;height:18px;background:#000"></div>
<div class="b" style="left:815px;top:441px;width:1px;height:18px;background:#000"></div>
<div class="b" style="left:917px;top:441px;width:1px;height:18px;background:#000"></div>
<div class="b" style="left:1019px;top:441px;width:1px;height:18px;background:#000"></div>
<div class="b" style="left:1121px;top:441px;width:1px;height:18px;background:#000"></div>
<div class="t" style="left:3.50px;top:444.84px;font-size:14.6px;color:#000;letter-spacing:0.6px;">23</div>
<div class="t" style="left:104.50px;top:445.35px;font-size:14.0px;color:#000;">NZ</div>
<div class="t" style="left:206.50px;top:445.35px;font-size:14.0px;color:#000;">ABAZ</div>
<div class="t" style="left:308.50px;top:445.35px;font-size:14.0px;color:#000;">VEP</div>
<div class="t" style="left:410.50px;top:445.35px;font-size:14.0px;color:#000;letter-spacing:0.2px;">/home/kaspe...</div>
<div class="t" style="left:512.50px;top:445.35px;font-size:14.0px;color:#000;letter-spacing:-0.15px;">ABAZ.NZ..VE...</div>
<div class="t" style="left:614.50px;top:444.84px;font-size:14.6px;color:#000;letter-spacing:0.6px;">2014-04-12...</div>
<div class="t" style="left:716.50px;top:444.84px;font-size:14.6px;color:#000;letter-spacing:0.6px;">2014-04-12...</div>
<div class="t" style="left:818.50px;top:444.84px;font-size:14.6px;color:#000;letter-spacing:0.6px;">86400</div>
<div class="t" style="left:920.50px;top:444.84px;font-size:14.6px;color:#000;letter-spacing:0.6px;">0</div>
<div class="t" style="left:1022.50px;top:444.84px;font-size:14.6px;color:#000;letter-spacing:0.6px;">0.1</div>
<div class="t" style="left:1124.50px;top:445.35px;font-size:14.0px;color:#000;">A</div>
<div class="b" style="left:0;top:461px;width:101px;height:18px;background:#ccffcc"></div>
<div class="b" style="left:101px;top:461px;width:714px;height:18px;background:#ccffff"></div>
<div class="b" style="left:815px;top:461px;width:306px;height:18px;background:#66ff66"></div>
<div class="b" style="left:1121px;top:461px;width:96px;height:18px;background:#ccffff"></div>
<div class="b" style="left:0;top:480px;width:1217px;height:1px;background:#ebebeb"></div>
<div class="b" style="left:101px;top:461px;width:1px;height:18px;background:#000"></div>
<div class="b" style="left:203px;top:461px;width:1px;height:18px;background:#000"></div>
<div class="b" style="left:305px;top:461px;width:1px;height:18px;background:#000"></div>
<div class="b" style="left:407px;top:461px;width:1px;height:18px;background:#000"></div>
<div class="b" style="left:509px;top:461px;width:1px;height:18px;background:#000"></div>
<div class="b" style="left:611px;top:461px;width:1px;height:18px;background:#000"></div>
<div class="b" style="left:713px;top:461px;width:1px;height:18px;background:#000"></div>
<div class="b" style="left:815px;top:461px;width:1px;height:18px;background:#000"></div>
<div class="b" style="left:917px;top:461px;width:1px;height:18px;background:#000"></div>
<div class="b" style="left:1019px;top:461px;width:1px;height:18px;background:#000"></div>
<div class="b" style="left:1121px;top:461px;width:1px;height:18px;background:#000"></div>
<div class="t" style="left:3.50px;top:464.84px;font-size:14.6px;color:#000;letter-spacing:0.6px;">24</div>
<div class="t" style="left:104.50px;top:465.35px;font-size:14.0px;color:#000;">NZ</div>
<div class="t" style="left:206.50px;top:465.35px;font-size:14.0px;color:#000;">ABAZ</div>
<div class="t" style="left:308.50px;top:465.35px;font-size:14.0px;color:#000;">LCQ</div>
<div class="t" style="left:410.50px;top:465.35px;font-size:14.0px;color:#000;letter-spacing:0.2px;">/home/kaspe...</div>
<div class="t" style="left:512.50px;top:465.35px;font-size:14.0px;color:#000;letter-spacing:-0.15px;">ABAZ.NZ..LC...</div>
<div class="t" style="left:614.50px;top:464.84px;font-size:14.6px;color:#000;letter-spacing:0.6px;">2014-04-13...</div>
<div class="t" style="left:716.50px;top:464.84px;font-size:14.6px;color:#000;letter-spacing:0.6px;">2014-04-14...</div>
<div class="t" style="left:818.50px;top:464.84px;font-size:14.6px;color:#000;letter-spacing:0.6px;">86401</div>
<div class="t" style="left:920.50px;top:464.84px;font-size:14.6px;color:#000;letter-spacing:0.6px;">0</div>
<div class="t" style="left:1022.50px;top:464.84px;font-size:14.6px;color:#000;letter-spacing:0.6px;">1</div>
<div class="t" style="left:1124.50px;top:465.35px;font-size:14.0px;color:#000;">A</div>
<div class="b" style="left:0;top:481px;width:101px;height:18px;background:#ccffcc"></div>
<div class="b" style="left:101px;top:481px;width:714px;height:18px;background:#ccffff"></div>
<div class="b" style="left:815px;top:481px;width:306px;height:18px;background:#66ff66"></div>
<div class="b" style="left:1121px;top:481px;width:96px;height:18px;background:#ccffff"></div>
<div class="b" style="left:0;top:500px;width:1217px;height:1px;background:#ebebeb"></div>
<div class="b" style="left:101px;top:481px;width:1px;height:18px;background:#000"></div>
<div class="b" style="left:203px;top:481px;width:1px;height:18px;background:#000"></div>
<div class="b" style="left:305px;top:481px;width:1px;height:18px;background:#000"></div>
<div class="b" style="left:407px;top:481px;width:1px;height:18px;background:#000"></div>
<div class="b" style="left:509px;top:481px;width:1px;height:18px;background:#000"></div>
<div class="b" style="left:611px;top:481px;width:1px;height:18px;background:#000"></div>
<div class="b" style="left:713px;top:481px;width:1px;height:18px;background:#000"></div>
<div class="b" style="left:815px;top:481px;width:1px;height:18px;background:#000"></div>
<div class="b" style="left:917px;top:481px;width:1px;height:18px;background:#000"></div>
<div class="b" style="left:1019px;top:481px;width:1px;height:18px;background:#000"></div>
<div class="b" style="left:1121px;top:481px;width:1px;height:18px;background:#000"></div>
<div class="t" style="left:3.50px;top:484.84px;font-size:14.6px;color:#000;letter-spacing:0.6px;">25</div>
<div class="t" style="left:104.50px;top:485.35px;font-size:14.0px;color:#000;">NZ</div>
<div class="t" style="left:206.50px;top:485.35px;font-size:14.0px;color:#000;">AWAZ</div>
<div class="t" style="left:308.50px;top:485.35px;font-size:14.0px;color:#000;">EHZ</div>
<div class="t" style="left:410.50px;top:485.35px;font-size:14.0px;color:#000;letter-spacing:0.2px;">/home/kaspe...</div>
<div class="t" style="left:512.50px;top:485.35px;font-size:14.0px;color:#000;letter-spacing:-0.15px;">AWAZ.NZ..E...</div>
<div class="t" style="left:614.50px;top:484.84px;font-size:14.6px;color:#000;letter-spacing:0.6px;">2014-04-13...</div>
<div class="t" style="left:716.50px;top:484.84px;font-size:14.6px;color:#000;letter-spacing:0.6px;">2014-04-13...</div>
<div class="t" style="left:818.50px;top:484.84px;font-size:14.6px;color:#000;letter-spacing:0.6px;">86400</div>
<div class="t" style="left:920.50px;top:484.84px;font-size:14.6px;color:#000;letter-spacing:0.6px;">0</div>
<div class="t" style="left:1022.50px;top:484.84px;font-size:14.6px;color:#000;letter-spacing:0.6px;">100</div>
<div class="t" style="left:1124.50px;top:485.35px;font-size:14.0px;color:#000;">A</div>
<div class="b" style="left:0;top:501px;width:101px;height:18px;background:#ccffcc"></div>
<div class="b" style="left:101px;top:501px;width:714px;height:18px;background:#ccffff"></div>
<div class="b" style="left:815px;top:501px;width:306px;height:18px;background:#66ff66"></div>
<div class="b" style="left:1121px;top:501px;width:96px;height:18px;background:#ccffff"></div>
<div class="b" style="left:0;top:520px;width:1217px;height:1px;background:#ebebeb"></div>
<div class="b" style="left:101px;top:501px;width:1px;height:18px;background:#000"></div>
<div class="b" style="left:203px;top:501px;width:1px;height:18px;background:#000"></div>
<div class="b" style="left:305px;top:501px;width:1px;height:18px;background:#000"></div>
<div class="b" style="left:407px;top:501px;width:1px;height:18px;background:#000"></div>
<div class="b" style="left:509px;top:501px;width:1px;height:18px;background:#000"></div>
<div class="b" style="left:611px;top:501px;width:1px;height:18px;background:#000"></div>
<div class="b" style="left:713px;top:501px;width:1px;height:18px;background:#000"></div>
<div class="b" style="left:815px;top:501px;width:1px;height:18px;background:#000"></div>
<div class="b" style="left:917px;top:501px;width:1px;height:18px;background:#000"></div>
<div class="b" style="left:1019px;top:501px;width:1px;height:18px;background:#000"></div>
<div class="b" style="left:1121px;top:501px;width:1px;height:18px;background:#000"></div>
<div class="t" style="left:3.50px;top:504.84px;font-size:14.6px;color:#000;letter-spacing:0.6px;">26</div>
<div class="t" style="left:104.50px;top:505.35px;font-size:14.0px;color:#000;">NZ</div>
<div class="t" style="left:206.50px;top:505.35px;font-size:14.0px;color:#000;">AWAZ</div>
<div class="t" style="left:308.50px;top:505.35px;font-size:14.0px;color:#000;">EH2</div>
<div class="t" style="left:410.50px;top:505.35px;font-size:14.0px;color:#000;letter-spacing:0.2px;">/home/kaspe...</div>
<div class="t" style="left:512.50px;top:505.35px;font-size:14.0px;color:#000;letter-spacing:-0.15px;">AWAZ.NZ..E...</div>
<div class="t" style="left:614.50px;top:504.84px;font-size:14.6px;color:#000;letter-spacing:0.6px;">2014-04-14...</div>
<div class="t" style="left:716.50px;top:504.84px;font-size:14.6px;color:#000;letter-spacing:0.6px;">2014-04-14...</div>
<div class="t" style="left:818.50px;top:504.84px;font-size:14.6px;color:#000;letter-spacing:0.6px;">85466.9300...</div>
<div class="t" style="left:920.50px;top:504.84px;font-size:14.6px;color:#000;letter-spacing:0.6px;">0</div>
<div class="t" style="left:1022.50px;top:504.84px;font-size:14.6px;color:#000;letter-spacing:0.6px;">100</div>
<div class="t" style="left:1124.50px;top:505.35px;font-size:14.0px;color:#000;">A</div>
<div class="b" style="left:0;top:521px;width:101px;height:18px;background:#ccffcc"></div>
<div class="b" style="left:101px;top:521px;width:714px;height:18px;background:#ccffff"></div>
<div class="b" style="left:815px;top:521px;width:306px;height:18px;background:#66ff66"></div>
<div class="b" style="left:1121px;top:521px;width:96px;height:18px;background:#ccffff"></div>
<div class="b" style="left:0;top:540px;width:1217px;height:1px;background:#ebebeb"></div>
<div class="b" style="left:101px;top:521px;width:1px;height:18px;background:#000"></div>
<div class="b" style="left:203px;top:521px;width:1px;height:18px;background:#000"></div>
<div class="b" style="left:305px;top:521px;width:1px;height:18px;background:#000"></div>
<div class="b" style="left:407px;top:521px;width:1px;height:18px;background:#000"></div>
<div class="b" style="left:509px;top:521px;width:1px;height:18px;background:#000"></div>
<div class="b" style="left:611px;top:521px;width:1px;height:18px;background:#000"></div>
<div class="b" style="left:713px;top:521px;width:1px;height:18px;background:#000"></div>
<div class="b" style="left:815px;top:521px;width:1px;height:18px;background:#000"></div>
<div class="b" style="left:917px;top:521px;width:1px;height:18px;background:#000"></div>
<div class="b" style="left:1019px;top:521px;width:1px;height:18px;background:#000"></div>
<div class="b" style="left:1121px;top:521px;width:1px;height:18px;background:#000"></div>
<div class="t" style="left:3.50px;top:524.84px;font-size:14.6px;color:#000;letter-spacing:0.6px;">27</div>
<div class="t" style="left:104.50px;top:525.35px;font-size:14.0px;color:#000;">NZ</div>
<div class="t" style="left:206.50px;top:525.35px;font-size:14.0px;color:#000;">AWAZ</div>
<div class="t" style="left:308.50px;top:525.35px;font-size:14.0px;color:#000;">VKI</div>
<div class="t" style="left:410.50px;top:525.35px;font-size:14.0px;color:#000;letter-spacing:0.2px;">/home/kaspe...</div>
<div class="t" style="left:512.50px;top:525.35px;font-size:14.0px;color:#000;letter-spacing:-0.15px;">AWAZ.NZ..V...</div>
<div class="t" style="left:614.50px;top:524.84px;font-size:14.6px;color:#000;letter-spacing:0.6px;">2014-04-14...</div>
<div class="t" style="left:716.50px;top:524.84px;font-size:14.6px;color:#000;letter-spacing:0.6px;">2014-04-14...</div>
<div class="t" style="left:818.50px;top:524.84px;font-size:14.6px;color:#000;letter-spacing:0.6px;">85560</div>
<div class="t" style="left:920.50px;top:524.84px;font-size:14.6px;color:#000;letter-spacing:0.6px;">0</div>
<div class="t" style="left:1022.50px;top:524.84px;font-size:14.6px;color:#000;letter-spacing:0.6px;">0.1</div>
<div class="t" style="left:1124.50px;top:525.35px;font-size:14.0px;color:#000;">A</div>
<div class="b" style="left:0;top:541px;width:101px;height:18px;background:#ccffcc"></div>
<div class="b" style="left:101px;top:541px;width:714px;height:18px;background:#ccffff"></div>
<div class="b" style="left:815px;top:541px;width:306px;height:18px;background:#66ff66"></div>
<div class="b" style="left:1121px;top:541px;width:96px;height:18px;background:#ccffff"></div>
<div class="b" style="left:0;top:560px;width:1217px;height:1px;background:#ebebeb"></div>
<div class="b" style="left:101px;top:541px;width:1px;height:18px;background:#000"></div>
<div class="b" style="left:203px;top:541px;width:1px;height:18px;background:#000"></div>
<div class="b" style="left:305px;top:541px;width:1px;height:18px;background:#000"></div>
<div class="b" style="left:407px;top:541px;width:1px;height:18px;background:#000"></div>
<div class="b" style="left:509px;top:541px;width:1px;height:18px;background:#000"></div>
<div class="b" style="left:611px;top:541px;width:1px;height:18px;background:#000"></div>
<div class="b" style="left:713px;top:541px;width:1px;height:18px;background:#000"></div>
<div class="b" style="left:815px;top:541px;width:1px;height:18px;background:#000"></div>
<div class="b" style="left:917px;top:541px;width:1px;height:18px;background:#000"></div>
<div class="b" style="left:1019px;top:541px;width:1px;height:18px;background:#000"></div>
<div class="b" style="left:1121px;top:541px;width:1px;height:18px;background:#000"></div>
<div class="t" style="left:3.50px;top:544.84px;font-size:14.6px;color:#000;letter-spacing:0.6px;">28</div>
<div class="t" style="left:104.50px;top:545.35px;font-size:14.0px;color:#000;">NZ</div>
<div class="t" style="left:206.50px;top:545.35px;font-size:14.0px;color:#000;">AWAZ</div>
<div class="t" style="left:308.50px;top:545.35px;font-size:14.0px;color:#000;">EH2</div>
<div class="t" style="left:410.50px;top:545.35px;font-size:14.0px;color:#000;letter-spacing:0.2px;">/home/kaspe...</div>
<div class="t" style="left:512.50px;top:545.35px;font-size:14.0px;color:#000;letter-spacing:-0.15px;">AWAZ.NZ..E...</div>
<div class="t" style="left:614.50px;top:544.84px;font-size:14.6px;color:#000;letter-spacing:0.6px;">2014-04-13...</div>
<div class="t" style="left:716.50px;top:544.84px;font-size:14.6px;color:#000;letter-spacing:0.6px;">2014-04-13...</div>
<div class="t" style="left:818.50px;top:544.84px;font-size:14.6px;color:#000;letter-spacing:0.6px;">86400</div>
<div class="t" style="left:920.50px;top:544.84px;font-size:14.6px;color:#000;letter-spacing:0.6px;">0</div>
<div class="t" style="left:1022.50px;top:544.84px;font-size:14.6px;color:#000;letter-spacing:0.6px;">100</div>
<div class="t" style="left:1124.50px;top:545.35px;font-size:14.0px;color:#000;">A</div>
<div class="b" style="left:0;top:561px;width:101px;height:18px;background:#ccffcc"></div>
<div class="b" style="left:101px;top:561px;width:714px;height:18px;background:#ccffff"></div>
<div class="b" style="left:815px;top:561px;width:306px;height:18px;background:#66ff66"></div>
<div class="b" style="left:1121px;top:561px;width:96px;height:18px;background:#ccffff"></div>
<div class="b" style="left:0;top:580px;width:1217px;height:1px;background:#ebebeb"></div>
<div class="b" style="left:101px;top:561px;width:1px;height:18px;background:#000"></div>
<div class="b" style="left:203px;top:561px;width:1px;height:18px;background:#000"></div>
<div class="b" style="left:305px;top:561px;width:1px;height:18px;background:#000"></div>
<div class="b" style="left:407px;top:561px;width:1px;height:18px;background:#000"></div>
<div class="b" style="left:509px;top:561px;width:1px;height:18px;background:#000"></div>
<div class="b" style="left:611px;top:561px;width:1px;height:18px;background:#000"></div>
<div class="b" style="left:713px;top:561px;width:1px;height:18px;background:#000"></div>
<div class="b" style="left:815px;top:561px;width:1px;height:18px;background:#000"></div>
<div class="b" style="left:917px;top:561px;width:1px;height:18px;background:#000"></div>
<div class="b" style="left:1019px;top:561px;width:1px;height:18px;background:#000"></div>
<div class="b" style="left:1121px;top:561px;width:1px;height:18px;background:#000"></div>
<div class="t" style="left:3.50px;top:564.84px;font-size:14.6px;color:#000;letter-spacing:0.6px;">29</div>
<div class="t" style="left:104.50px;top:565.35px;font-size:14.0px;color:#000;">NZ</div>
<div class="t" style="left:206.50px;top:565.35px;font-size:14.0px;color:#000;">AWAZ</div>
<div class="t" style="left:308.50px;top:565.35px;font-size:14.0px;color:#000;">VEC</div>
<div class="t" style="left:410.50px;top:565.35px;font-size:14.0px;color:#000;letter-spacing:0.2px;">/home/kaspe...</div>
<div class="t" style="left:512.50px;top:565.35px;font-size:14.0px;color:#000;letter-spacing:-0.15px;">AWAZ.NZ..V...</div>
<div class="t" style="left:614.50px;top:564.84px;font-size:14.6px;color:#000;letter-spacing:0.6px;">2014-04-14...</div>
<div class="t" style="left:716.50px;top:564.84px;font-size:14.6px;color:#000;letter-spacing:0.6px;">2014-04-14...</div>
<div class="t" style="left:818.50px;top:564.84px;font-size:14.6px;color:#000;letter-spacing:0.6px;">85100</div>
<div class="t" style="left:920.50px;top:564.84px;font-size:14.6px;color:#000;letter-spacing:0.6px;">0</div>
<div class="t" style="left:1022.50px;top:564.84px;font-size:14.6px;color:#000;letter-spacing:0.6px;">0.1</div>
<div class="t" style="left:1124.50px;top:565.35px;font-size:14.0px;color:#000;">A</div>
<div class="b" style="left:0;top:581px;width:101px;height:18px;background:#ccffcc"></div>
<div class="b" style="left:101px;top:581px;width:714px;height:18px;background:#ccffff"></div>
<div class="b" style="left:815px;top:581px;width:306px;height:18px;background:#66ff66"></div>
<div class="b" style="left:1121px;top:581px;width:96px;height:18px;background:#ccffff"></div>
<div class="b" style="left:0;top:600px;width:1217px;height:1px;background:#ebebeb"></div>
<div class="b" style="left:101px;top:581px;width:1px;height:18px;background:#000"></div>
<div class="b" style="left:203px;top:581px;width:1px;height:18px;background:#000"></div>
<div class="b" style="left:305px;top:581px;width:1px;height:18px;background:#000"></div>
<div class="b" style="left:407px;top:581px;width:1px;height:18px;background:#000"></div>
<div class="b" style="left:509px;top:581px;width:1px;height:18px;background:#000"></div>
<div class="b" style="left:611px;top:581px;width:1px;height:18px;background:#000"></div>
<div class="b" style="left:713px;top:581px;width:1px;height:18px;background:#000"></div>
<div class="b" style="left:815px;top:581px;width:1px;height:18px;background:#000"></div>
<div class="b" style="left:917px;top:581px;width:1px;height:18px;background:#000"></div>
<div class="b" style="left:1019px;top:581px;width:1px;height:18px;background:#000"></div>
<div class="b" style="left:1121px;top:581px;width:1px;height:18px;background:#000"></div>
<div class="t" style="left:3.50px;top:584.84px;font-size:14.6px;color:#000;letter-spacing:0.6px;">30</div>
<div class="t" style="left:104.50px;top:585.35px;font-size:14.0px;color:#000;">NZ</div>
<div class="t" style="left:206.50px;top:585.35px;font-size:14.0px;color:#000;">AWAZ</div>
<div class="t" style="left:308.50px;top:585.35px;font-size:14.0px;color:#000;">EH1</div>
<div class="t" style="left:410.50px;top:585.35px;font-size:14.0px;color:#000;letter-spacing:0.2px;">/home/kaspe...</div>
<div class="t" style="left:512.50px;top:585.35px;font-size:14.0px;color:#000;letter-spacing:-0.15px;">AWAZ.NZ..E...</div>
<div class="t" style="left:614.50px;top:584.84px;font-size:14.6px;color:#000;letter-spacing:0.6px;">2014-04-13...</div>
<div class="t" style="left:716.50px;top:584.84px;font-size:14.6px;color:#000;letter-spacing:0.6px;">2014-04-13...</div>
<div class="t" style="left:818.50px;top:584.84px;font-size:14.6px;color:#000;letter-spacing:0.6px;">86400</div>
<div class="t" style="left:920.50px;top:584.84px;font-size:14.6px;color:#000;letter-spacing:0.6px;">0</div>
<div class="t" style="left:1022.50px;top:584.84px;font-size:14.6px;color:#000;letter-spacing:0.6px;">100</div>
<div class="t" style="left:1124.50px;top:585.35px;font-size:14.0px;color:#000;">A</div>
<div class="b" style="left:0;top:601px;width:101px;height:18px;background:#ccffcc"></div>
<div class="b" style="left:101px;top:601px;width:714px;height:18px;background:#ccffff"></div>
<div class="b" style="left:815px;top:601px;width:306px;height:18px;background:#66ff66"></div>
<div class="b" style="left:1121px;top:601px;width:96px;height:18px;background:#ccffff"></div>
<div class="b" style="left:0;top:620px;width:1217px;height:1px;background:#ebebeb"></div>
<div class="b" style="left:101px;top:601px;width:1px;height:18px;background:#000"></div>
<div class="b" style="left:203px;top:601px;width:1px;height:18px;background:#000"></div>
<div class="b" style="left:305px;top:601px;width:1px;height:18px;background:#000"></div>
<div class="b" style="left:407px;top:601px;width:1px;height:18px;background:#000"></div>
<div class="b" style="left:509px;top:601px;width:1px;height:18px;background:#000"></div>
<div class="b" style="left:611px;top:601px;width:1px;height:18px;background:#000"></div>
<div class="b" style="left:713px;top:601px;width:1px;height:18px;background:#000"></div>
<div class="b" style="left:815px;top:601px;width:1px;height:18px;background:#000"></div>
<div class="b" style="left:917px;top:601px;width:1px;height:18px;background:#000"></div>
<div class="b" style="left:1019px;top:601px;width:1px;height:18px;background:#000"></div>
<div class="b" style="left:1121px;top:601px;width:1px;height:18px;background:#000"></div>
<div class="t" style="left:3.50px;top:604.84px;font-size:14.6px;color:#000;letter-spacing:0.6px;">31</div>
<div class="t" style="left:104.50px;top:605.35px;font-size:14.0px;color:#000;">NZ</div>
<div class="t" style="left:206.50px;top:605.35px;font-size:14.0px;color:#000;">AWAZ</div>
<div class="t" style="left:308.50px;top:605.35px;font-size:14.0px;color:#000;">VEP</div>
<div class="t" style="left:410.50px;top:605.35px;font-size:14.0px;color:#000;letter-spacing:0.2px;">/home/kaspe...</div>
<div class="t" style="left:512.50px;top:605.35px;font-size:14.0px;color:#000;letter-spacing:-0.15px;">AWAZ.NZ..V...</div>
<div class="t" style="left:614.50px;top:604.84px;font-size:14.6px;color:#000;letter-spacing:0.6px;">2014-04-14...</div>
<div class="t" style="left:716.50px;top:604.84px;font-size:14.6px;color:#000;letter-spacing:0.6px;">2014-04-14...</div>
<div class="t" style="left:818.50px;top:604.84px;font-size:14.6px;color:#000;letter-spacing:0.6px;">85560</div>
<div class="t" style="left:920.50px;top:604.84px;font-size:14.6px;color:#000;letter-spacing:0.6px;">0</div>
<div class="t" style="left:1022.50px;top:604.84px;font-size:14.6px;color:#000;letter-spacing:0.6px;">0.1</div>
<div class="t" style="left:1124.50px;top:605.35px;font-size:14.0px;color:#000;">A</div>
<div class="b" style="left:0;top:621px;width:101px;height:18px;background:#ccffcc"></div>
<div class="b" style="left:101px;top:621px;width:714px;height:18px;background:#ccffff"></div>
<div class="b" style="left:815px;top:621px;width:306px;height:18px;background:#66ff66"></div>
<div class="b" style="left:1121px;top:621px;width:96px;height:18px;background:#ccffff"></div>
<div class="b" style="left:0;top:640px;width:1217px;height:1px;background:#ebebeb"></div>
<div class="b" style="left:101px;top:621px;width:1px;height:18px;background:#000"></div>
<div class="b" style="left:203px;top:621px;width:1px;height:18px;background:#000"></div>
<div class="b" style="left:305px;top:621px;width:1px;height:18px;background:#000"></div>
<div class="b" style="left:407px;top:621px;width:1px;height:18px;background:#000"></div>
<div class="b" style="left:509px;top:621px;width:1px;height:18px;background:#000"></div>
<div class="b" style="left:611px;top:621px;width:1px;height:18px;background:#000"></div>
<div class="b" style="left:713px;top:621px;width:1px;height:18px;background:#000"></div>
<div class="b" style="left:815px;top:621px;width:1px;height:18px;background:#000"></div>
<div class="b" style="left:917px;top:621px;width:1px;height:18px;background:#000"></div>
<div class="b" style="left:1019px;top:621px;width:1px;height:18px;background:#000"></div>
<div class="b" style="left:1121px;top:621px;width:1px;height:18px;background:#000"></div>
<div class="t" style="left:3.50px;top:624.84px;font-size:14.6px;color:#000;letter-spacing:0.6px;">32</div>
<div class="t" style="left:104.50px;top:625.35px;font-size:14.0px;color:#000;">NZ</div>
<div class="t" style="left:206.50px;top:625.35px;font-size:14.0px;color:#000;">AWAZ</div>
<div class="t" style="left:308.50px;top:625.35px;font-size:14.0px;color:#000;">VEC</div>
<div class="t" style="left:410.50px;top:625.35px;font-size:14.0px;color:#000;letter-spacing:0.2px;">/home/kaspe...</div>
<div class="t" style="left:512.50px;top:625.35px;font-size:14.0px;color:#000;letter-spacing:-0.15px;">AWAZ.NZ..V...</div>
<div class="t" style="left:614.50px;top:624.84px;font-size:14.6px;color:#000;letter-spacing:0.6px;">2014-04-12...</div>
<div class="t" style="left:716.50px;top:624.84px;font-size:14.6px;color:#000;letter-spacing:0.6px;">2014-04-12...</div>
<div class="t" style="left:818.50px;top:624.84px;font-size:14.6px;color:#000;letter-spacing:0.6px;">86400</div>
<div class="t" style="left:920.50px;top:624.84px;font-size:14.6px;color:#000;letter-spacing:0.6px;">0</div>
<div class="t" style="left:1022.50px;top:624.84px;font-size:14.6px;color:#000;letter-spacing:0.6px;">0.1</div>
<div class="t" style="left:1124.50px;top:625.35px;font-size:14.0px;color:#000;">A</div>
<div class="b" style="left:0;top:641px;width:101px;height:18px;background:#ccffcc"></div>
<div class="b" style="left:101px;top:641px;width:714px;height:18px;background:#ccffff"></div>
<div class="b" style="left:815px;top:641px;width:306px;height:18px;background:#66ff66"></div>
<div class="b" style="left:1121px;top:641px;width:96px;height:18px;background:#ccffff"></div>
<div class="b" style="left:0;top:660px;width:1217px;height:1px;background:#ebebeb"></div>
<div class="b" style="left:101px;top:641px;width:1px;height:18px;background:#000"></div>
<div class="b" style="left:203px;top:641px;width:1px;height:18px;background:#000"></div>
<div class="b" style="left:305px;top:641px;width:1px;height:18px;background:#000"></div>
<div class="b" style="left:407px;top:641px;width:1px;height:18px;background:#000"></div>
<div class="b" style="left:509px;top:641px;width:1px;height:18px;background:#000"></div>
<div class="b" style="left:611px;top:641px;width:1px;height:18px;background:#000"></div>
<div class="b" style="left:713px;top:641px;width:1px;height:18px;background:#000"></div>
<div class="b" style="left:815px;top:641px;width:1px;height:18px;background:#000"></div>
<div class="b" style="left:917px;top:641px;width:1px;height:18px;background:#000"></div>
<div class="b" style="left:1019px;top:641px;width:1px;height:18px;background:#000"></div>
<div class="b" style="left:1121px;top:641px;width:1px;height:18px;background:#000"></div>
<div class="t" style="left:3.50px;top:644.84px;font-size:14.6px;color:#000;letter-spacing:0.6px;">33</div>
<div class="t" style="left:104.50px;top:645.35px;font-size:14.0px;color:#000;">NZ</div>
<div class="t" style="left:206.50px;top:645.35px;font-size:14.0px;color:#000;">AWAZ</div>
<div class="t" style="left:308.50px;top:645.35px;font-size:14.0px;color:#000;">VEC</div>
<div class="t" style="left:410.50px;top:645.35px;font-size:14.0px;color:#000;letter-spacing:0.2px;">/home/kaspe...</div>
<div class="t" style="left:512.50px;top:645.35px;font-size:14.0px;color:#000;letter-spacing:-0.15px;">AWAZ.NZ..V...</div>
<div class="t" style="left:614.50px;top:644.84px;font-size:14.6px;color:#000;letter-spacing:0.6px;">2014-04-13...</div>
<div class="t" style="left:716.50px;top:644.84px;font-size:14.6px;color:#000;letter-spacing:0.6px;">2014-04-13...</div>
<div class="t" style="left:818.50px;top:644.84px;font-size:14.6px;color:#000;letter-spacing:0.6px;">86400</div>
<div class="t" style="left:920.50px;top:644.84px;font-size:14.6px;color:#000;letter-spacing:0.6px;">0</div>
<div class="t" style="left:1022.50px;top:644.84px;font-size:14.6px;color:#000;letter-spacing:0.6px;">0.1</div>
<div class="t" style="left:1124.50px;top:645.35px;font-size:14.0px;color:#000;">A</div>
<div class="b" style="left:0;top:661px;width:101px;height:18px;background:#ccffcc"></div>
<div class="b" style="left:101px;top:661px;width:714px;height:18px;background:#ccffff"></div>
<div class="b" style="left:815px;top:661px;width:306px;height:18px;background:#66ff66"></div>
<div class="b" style="left:1121px;top:661px;width:96px;height:18px;background:#ccffff"></div>
<div class="b" style="left:0;top:680px;width:1217px;height:1px;background:#ebebeb"></div>
<div class="b" style="left:101px;top:661px;width:1px;height:18px;background:#000"></div>
<div class="b" style="left:203px;top:661px;width:1px;height:18px;background:#000"></div>
<div class="b" style="left:305px;top:661px;width:1px;height:18px;background:#000"></div>
<div class="b" style="left:407px;top:661px;width:1px;height:18px;background:#000"></div>
<div class="b" style="left:509px;top:661px;width:1px;height:18px;background:#000"></div>
<div class="b" style="left:611px;top:661px;width:1px;height:18px;background:#000"></div>
<div class="b" style="left:713px;top:661px;width:1px;height:18px;background:#000"></div>
<div class="b" style="left:815px;top:661px;width:1px;height:18px;background:#000"></div>
<div class="b" style="left:917px;top:661px;width:1px;height:18px;background:#000"></div>
<div class="b" style="left:1019px;top:661px;width:1px;height:18px;background:#000"></div>
<div class="b" style="left:1121px;top:661px;width:1px;height:18px;background:#000"></div>
<div class="t" style="left:3.50px;top:664.84px;font-size:14.6px;color:#000;letter-spacing:0.6px;">34</div>
<div class="t" style="left:104.50px;top:665.35px;font-size:14.0px;color:#000;">NZ</div>
<div class="t" style="left:206.50px;top:665.35px;font-size:14.0px;color:#000;">AWAZ</div>
<div class="t" style="left:308.50px;top:665.35px;font-size:14.0px;color:#000;">EHZ</div>
<div class="t" style="left:410.50px;top:665.35px;font-size:14.0px;color:#000;letter-spacing:0.2px;">/home/kaspe...</div>
<div class="t" style="left:512.50px;top:665.35px;font-size:14.0px;color:#000;letter-spacing:-0.15px;">AWAZ.NZ..E...</div>
<div class="t" style="left:614.50px;top:664.84px;font-size:14.6px;color:#000;letter-spacing:0.6px;">2014-04-14...</div>
<div class="t" style="left:716.50px;top:664.84px;font-size:14.6px;color:#000;letter-spacing:0.6px;">2014-04-14...</div>
<div class="t" style="left:818.50px;top:664.84px;font-size:14.6px;color:#000;letter-spacing:0.6px;">85350.33</div>
<div class="t" style="left:920.50px;top:664.84px;font-size:14.6px;color:#000;letter-spacing:0.6px;">0</div>
<div class="t" style="left:1022.50px;top:664.84px;font-size:14.6px;color:#000;letter-spacing:0.6px;">100</div>
<div class="t" style="left:1124.50px;top:665.35px;font-size:14.0px;color:#000;">A</div>
<div class="b" style="left:0;top:681px;width:101px;height:18px;background:#ccffcc"></div>
<div class="b" style="left:101px;top:681px;width:714px;height:18px;background:#ccffff"></div>
<div class="b" style="left:815px;top:681px;width:306px;height:18px;background:#66ff66"></div>
<div class="b" style="left:1121px;top:681px;width:96px;height:18px;background:#ccffff"></div>
<div class="b" style="left:0;top:700px;width:1217px;height:1px;background:#ebebeb"></div>
<div class="b" style="left:101px;top:681px;width:1px;height:18px;background:#000"></div>
<div class="b" style="left:203px;top:681px;width:1px;height:18px;background:#000"></div>
<div class="b" style="left:305px;top:681px;width:1px;height:18px;background:#000"></div>
<div class="b" style="left:407px;top:681px;width:1px;height:18px;background:#000"></div>
<div class="b" style="left:509px;top:681px;width:1px;height:18px;background:#000"></div>
<div class="b" style="left:611px;top:681px;width:1px;height:18px;background:#000"></div>
<div class="b" style="left:713px;top:681px;width:1px;height:18px;background:#000"></div>
<div class="b" style="left:815px;top:681px;width:1px;height:18px;background:#000"></div>
<div class="b" style="left:917px;top:681px;width:1px;height:18px;background:#000"></div>
<div class="b" style="left:1019px;top:681px;width:1px;height:18px;background:#000"></div>
<div class="b" style="left:1121px;top:681px;width:1px;height:18px;background:#000"></div>
<div class="t" style="left:3.50px;top:684.84px;font-size:14.6px;color:#000;letter-spacing:0.6px;">35</div>
<div class="t" style="left:104.50px;top:685.35px;font-size:14.0px;color:#000;">NZ</div>
<div class="t" style="left:206.50px;top:685.35px;font-size:14.0px;color:#000;">AWAZ</div>
<div class="t" style="left:308.50px;top:685.35px;font-size:14.0px;color:#000;">EH2</div>
<div class="t" style="left:410.50px;top:685.35px;font-size:14.0px;color:#000;letter-spacing:0.2px;">/home/kaspe...</div>
<div class="t" style="left:512.50px;top:685.35px;font-size:14.0px;color:#000;letter-spacing:-0.15px;">AWAZ.NZ..E...</div>
<div class="t" style="left:614.50px;top:684.84px;font-size:14.6px;color:#000;letter-spacing:0.6px;">2014-04-12...</div>
<div class="t" style="left:716.50px;top:684.84px;font-size:14.6px;color:#000;letter-spacing:0.6px;">2014-04-12...</div>
<div class="t" style="left:818.50px;top:684.84px;font-size:14.6px;color:#000;letter-spacing:0.6px;">86400</div>
<div class="t" style="left:920.50px;top:684.84px;font-size:14.6px;color:#000;letter-spacing:0.6px;">0</div>
<div class="t" style="left:1022.50px;top:684.84px;font-size:14.6px;color:#000;letter-spacing:0.6px;">100</div>
<div class="t" style="left:1124.50px;top:685.35px;font-size:14.0px;color:#000;">A</div>
<div class="b" style="left:0;top:701px;width:101px;height:18px;background:#ccffcc"></div>
<div class="b" style="left:101px;top:701px;width:714px;height:18px;background:#ccffff"></div>
<div class="b" style="left:815px;top:701px;width:306px;height:18px;background:#66ff66"></div>
<div class="b" style="left:1121px;top:701px;width:96px;height:18px;background:#ccffff"></div>
<div class="b" style="left:0;top:720px;width:1217px;height:1px;background:#ebebeb"></div>
<div class="b" style="left:101px;top:701px;width:1px;height:18px;background:#000"></div>
<div class="b" style="left:203px;top:701px;width:1px;height:18px;background:#000"></div>
<div class="b" style="left:305px;top:701px;width:1px;height:18px;background:#000"></div>
<div class="b" style="left:407px;top:701px;width:1px;height:18px;background:#000"></div>
<div class="b" style="left:509px;top:701px;width:1px;height:18px;background:#000"></div>
<div class="b" style="left:611px;top:701px;width:1px;height:18px;background:#000"></div>
<div class="b" style="left:713px;top:701px;width:1px;height:18px;background:#000"></div>
<div class="b" style="left:815px;top:701px;width:1px;height:18px;background:#000"></div>
<div class="b" style="left:917px;top:701px;width:1px;height:18px;background:#000"></div>
<div class="b" style="left:1019px;top:701px;width:1px;height:18px;background:#000"></div>
<div class="b" style="left:1121px;top:701px;width:1px;height:18px;background:#000"></div>
<div class="t" style="left:3.50px;top:704.84px;font-size:14.6px;color:#000;letter-spacing:0.6px;">36</div>
<div class="t" style="left:104.50px;top:705.35px;font-size:14.0px;color:#000;">NZ</div>
<div class="t" style="left:206.50px;top:705.35px;font-size:14.0px;color:#000;">AWAZ</div>
<div class="t" style="left:308.50px;top:705.35px;font-size:14.0px;color:#000;">VEM</div>
<div class="t" style="left:410.50px;top:705.35px;font-size:14.0px;color:#000;letter-spacing:0.2px;">/home/kaspe...</div>
<div class="t" style="left:512.50px;top:705.35px;font-size:14.0px;color:#000;letter-spacing:-0.15px;">AWAZ.NZ..V...</div>
<div class="t" style="left:614.50px;top:704.84px;font-size:14.6px;color:#000;letter-spacing:0.6px;">2014-04-13...</div>
<div class="t" style="left:716.50px;top:704.84px;font-size:14.6px;color:#000;letter-spacing:0.6px;">2014-04-13...</div>
<div class="t" style="left:818.50px;top:704.84px;font-size:14.6px;color:#000;letter-spacing:0.6px;">86400</div>
<div class="t" style="left:920.50px;top:704.84px;font-size:14.6px;color:#000;letter-spacing:0.6px;">0</div>
<div class="t" style="left:1022.50px;top:704.84px;font-size:14.6px;color:#000;letter-spacing:0.6px;">0.1</div>
<div class="t" style="left:1124.50px;top:705.35px;font-size:14.0px;color:#000;">A</div>
<div class="b" style="left:0;top:721px;width:101px;height:18px;background:#ccffcc"></div>
<div class="b" style="left:101px;top:721px;width:714px;height:18px;background:#ccffff"></div>
<div class="b" style="left:815px;top:721px;width:306px;height:18px;background:#66ff66"></div>
<div class="b" style="left:1121px;top:721px;width:96px;height:18px;background:#ccffff"></div>
<div class="b" style="left:0;top:740px;width:1217px;height:1px;background:#ebebeb"></div>
<div class="b" style="left:101px;top:721px;width:1px;height:18px;background:#000"></div>
<div class="b" style="left:203px;top:721px;width:1px;height:18px;background:#000"></div>
<div class="b" style="left:305px;top:721px;width:1px;height:18px;background:#000"></div>
<div class="b" style="left:407px;top:721px;width:1px;height:18px;background:#000"></div>
<div class="b" style="left:509px;top:721px;width:1px;height:18px;background:#000"></div>
<div class="b" style="left:611px;top:721px;width:1px;height:18px;background:#000"></div>
<div class="b" style="left:713px;top:721px;width:1px;height:18px;background:#000"></div>
<div class="b" style="left:815px;top:721px;width:1px;height:18px;background:#000"></div>
<div class="b" style="left:917px;top:721px;width:1px;height:18px;background:#000"></div>
<div class="b" style="left:1019px;top:721px;width:1px;height:18px;background:#000"></div>
<div class="b" style="left:1121px;top:721px;width:1px;height:18px;background:#000"></div>
<div class="t" style="left:3.50px;top:724.84px;font-size:14.6px;color:#000;letter-spacing:0.6px;">37</div>
<div class="t" style="left:104.50px;top:725.35px;font-size:14.0px;color:#000;">NZ</div>
<div class="t" style="left:206.50px;top:725.35px;font-size:14.0px;color:#000;">AWAZ</div>
<div class="t" style="left:308.50px;top:725.35px;font-size:14.0px;color:#000;">VEM</div>
<div class="t" style="left:410.50px;top:725.35px;font-size:14.0px;color:#000;letter-spacing:0.2px;">/home/kaspe...</div>
<div class="t" style="left:512.50px;top:725.35px;font-size:14.0px;color:#000;letter-spacing:-0.15px;">AWAZ.NZ..V...</div>
<div class="t" style="left:614.50px;top:724.84px;font-size:14.6px;color:#000;letter-spacing:0.6px;">2014-04-12...</div>
<div class="t" style="left:716.50px;top:724.84px;font-size:14.6px;color:#000;letter-spacing:0.6px;">2014-04-12...</div>
<div class="t" style="left:818.50px;top:724.84px;font-size:14.6px;color:#000;letter-spacing:0.6px;">86400</div>
<div class="t" style="left:920.50px;top:724.84px;font-size:14.6px;color:#000;letter-spacing:0.6px;">0</div>
<div class="t" style="left:1022.50px;top:724.84px;font-size:14.6px;color:#000;letter-spacing:0.6px;">0.1</div>
<div class="t" style="left:1124.50px;top:725.35px;font-size:14.0px;color:#000;">A</div>
<div class="b" style="left:0;top:741px;width:101px;height:18px;background:#ccffcc"></div>
<div class="b" style="left:101px;top:741px;width:714px;height:18px;background:#ccffff"></div>
<div class="b" style="left:815px;top:741px;width:306px;height:18px;background:#66ff66"></div>
<div class="b" style="left:1121px;top:741px;width:96px;height:18px;background:#ccffff"></div>
<div class="b" style="left:0;top:760px;width:1217px;height:1px;background:#ebebeb"></div>
<div class="b" style="left:101px;top:741px;width:1px;height:18px;background:#000"></div>
<div class="b" style="left:203px;top:741px;width:1px;height:18px;background:#000"></div>
<div class="b" style="left:305px;top:741px;width:1px;height:18px;background:#000"></div>
<div class="b" style="left:407px;top:741px;width:1px;height:18px;background:#000"></div>
<div class="b" style="left:509px;top:741px;width:1px;height:18px;background:#000"></div>
<div class="b" style="left:611px;top:741px;width:1px;height:18px;background:#000"></div>
<div class="b" style="left:713px;top:741px;width:1px;height:18px;background:#000"></div>
<div class="b" style="left:815px;top:741px;width:1px;height:18px;background:#000"></div>
<div class="b" style="left:917px;top:741px;width:1px;height:18px;background:#000"></div>
<div class="b" style="left:1019px;top:741px;width:1px;height:18px;background:#000"></div>
<div class="b" style="left:1121px;top:741px;width:1px;height:18px;background:#000"></div>
<div class="t" style="left:3.50px;top:744.84px;font-size:14.6px;color:#000;letter-spacing:0.6px;">38</div>
<div class="t" style="left:104.50px;top:745.35px;font-size:14.0px;color:#000;">NZ</div>
<div class="t" style="left:206.50px;top:745.35px;font-size:14.0px;color:#000;">AWAZ</div>
<div class="t" style="left:308.50px;top:745.35px;font-size:14.0px;color:#000;">VKI</div>
<div class="t" style="left:410.50px;top:745.35px;font-size:14.0px;color:#000;letter-spacing:0.2px;">/home/kaspe...</div>
<div class="t" style="left:512.50px;top:745.35px;font-size:14.0px;color:#000;letter-spacing:-0.15px;">AWAZ.NZ..V...</div>
<div class="t" style="left:614.50px;top:744.84px;font-size:14.6px;color:#000;letter-spacing:0.6px;">2014-04-12...</div>
<div class="t" style="left:716.50px;top:744.84px;font-size:14.6px;color:#000;letter-spacing:0.6px;">2014-04-12...</div>
<div class="t" style="left:818.50px;top:744.84px;font-size:14.6px;color:#000;letter-spacing:0.6px;">86400</div>
<div class="t" style="left:920.50px;top:744.84px;font-size:14.6px;color:#000;letter-spacing:0.6px;">0</div>
<div class="t" style="left:1022.50px;top:744.84px;font-size:14.6px;color:#000;letter-spacing:0.6px;">0.1</div>
<div class="t" style="left:1124.50px;top:745.35px;font-size:14.0px;color:#000;">A</div>
<div class="b" style="left:0;top:761px;width:101px;height:18px;background:#ccffcc"></div>
<div class="b" style="left:101px;top:761px;width:714px;height:18px;background:#ccffff"></div>
<div class="b" style="left:815px;top:761px;width:306px;height:18px;background:#66ff66"></div>
<div class="b" style="left:1121px;top:761px;width:96px;height:18px;background:#ccffff"></div>
<div class="b" style="left:0;top:780px;width:1217px;height:1px;background:#ebebeb"></div>
<div class="b" style="left:101px;top:761px;width:1px;height:18px;background:#000"></div>
<div class="b" style="left:203px;top:761px;width:1px;height:18px;background:#000"></div>
<div class="b" style="left:305px;top:761px;width:1px;height:18px;background:#000"></div>
<div class="b" style="left:407px;top:761px;width:1px;height:18px;background:#000"></div>
<div class="b" style="left:509px;top:761px;width:1px;height:18px;background:#000"></div>
<div class="b" style="left:611px;top:761px;width:1px;height:18px;background:#000"></div>
<div class="b" style="left:713px;top:761px;width:1px;height:18px;background:#000"></div>
<div class="b" style="left:815px;top:761px;width:1px;height:18px;background:#000"></div>
<div class="b" style="left:917px;top:761px;width:1px;height:18px;background:#000"></div>
<div class="b" style="left:1019px;top:761px;width:1px;height:18px;background:#000"></div>
<div class="b" style="left:1121px;top:761px;width:1px;height:18px;background:#000"></div>
<div class="t" style="left:3.50px;top:764.84px;font-size:14.6px;color:#000;letter-spacing:0.6px;">39</div>
<div class="t" style="left:104.50px;top:765.35px;font-size:14.0px;color:#000;">NZ</div>
<div class="t" style="left:206.50px;top:765.35px;font-size:14.0px;color:#000;">AWAZ</div>
<div class="t" style="left:308.50px;top:765.35px;font-size:14.0px;color:#000;">EHZ</div>
<div class="t" style="left:410.50px;top:765.35px;font-size:14.0px;color:#000;letter-spacing:0.2px;">/home/kaspe...</div>
<div class="t" style="left:512.50px;top:765.35px;font-size:14.0px;color:#000;letter-spacing:-0.15px;">AWAZ.NZ..E...</div>
<div class="t" style="left:614.50px;top:764.84px;font-size:14.6px;color:#000;letter-spacing:0.6px;">2014-04-12...</div>
<div class="t" style="left:716.50px;top:764.84px;font-size:14.6px;color:#000;letter-spacing:0.6px;">2014-04-12...</div>
<div class="t" style="left:818.50px;top:764.84px;font-size:14.6px;color:#000;letter-spacing:0.6px;">86400</div>
<div class="t" style="left:920.50px;top:764.84px;font-size:14.6px;color:#000;letter-spacing:0.6px;">0</div>
<div class="t" style="left:1022.50px;top:764.84px;font-size:14.6px;color:#000;letter-spacing:0.6px;">100</div>
<div class="t" style="left:1124.50px;top:765.35px;font-size:14.0px;color:#000;">A</div>
<div class="b" style="left:0;top:781px;width:101px;height:18px;background:#ccffcc"></div>
<div class="b" style="left:101px;top:781px;width:714px;height:18px;background:#ccffff"></div>
<div class="b" style="left:815px;top:781px;width:306px;height:18px;background:#66ff66"></div>
<div class="b" style="left:1121px;top:781px;width:96px;height:18px;background:#ccffff"></div>
<div class="b" style="left:0;top:800px;width:1217px;height:1px;background:#ebebeb"></div>
<div class="b" style="left:101px;top:781px;width:1px;height:18px;background:#000"></div>
<div class="b" style="left:203px;top:781px;width:1px;height:18px;background:#000"></div>
<div class="b" style="left:305px;top:781px;width:1px;height:18px;background:#000"></div>
<div class="b" style="left:407px;top:781px;width:1px;height:18px;background:#000"></div>
<div class="b" style="left:509px;top:781px;width:1px;height:18px;background:#000"></div>
<div class="b" style="left:611px;top:781px;width:1px;height:18px;background:#000"></div>
<div class="b" style="left:713px;top:781px;width:1px;height:18px;background:#000"></div>
<div class="b" style="left:815px;top:781px;width:1px;height:18px;background:#000"></div>
<div class="b" style="left:917px;top:781px;width:1px;height:18px;background:#000"></div>
<div class="b" style="left:1019px;top:781px;width:1px;height:18px;background:#000"></div>
<div class="b" style="left:1121px;top:781px;width:1px;height:18px;background:#000"></div>
<div class="t" style="left:3.50px;top:784.84px;font-size:14.6px;color:#000;letter-spacing:0.6px;">40</div>
<div class="t" style="left:104.50px;top:785.35px;font-size:14.0px;color:#000;">NZ</div>
<div class="t" style="left:206.50px;top:785.35px;font-size:14.0px;color:#000;">AWAZ</div>
<div class="t" style="left:308.50px;top:785.35px;font-size:14.0px;color:#000;">VEM</div>
<div class="t" style="left:410.50px;top:785.35px;font-size:14.0px;color:#000;letter-spacing:0.2px;">/home/kaspe...</div>
<div class="t" style="left:512.50px;top:785.35px;font-size:14.0px;color:#000;letter-spacing:-0.15px;">AWAZ.NZ..V...</div>
<div class="t" style="left:614.50px;top:784.84px;font-size:14.6px;color:#000;letter-spacing:0.6px;">2014-04-14...</div>
<div class="t" style="left:716.50px;top:784.84px;font-size:14.6px;color:#000;letter-spacing:0.6px;">2014-04-14...</div>
<div class="t" style="left:818.50px;top:784.84px;font-size:14.6px;color:#000;letter-spacing:0.6px;">85570</div>
<div class="t" style="left:920.50px;top:784.84px;font-size:14.6px;color:#000;letter-spacing:0.6px;">0</div>
<div class="t" style="left:1022.50px;top:784.84px;font-size:14.6px;color:#000;letter-spacing:0.6px;">0.1</div>
<div class="t" style="left:1124.50px;top:785.35px;font-size:14.0px;color:#000;">A</div>
<div class="b" style="left:0;top:801px;width:101px;height:18px;background:#ccffcc"></div>
<div class="b" style="left:101px;top:801px;width:714px;height:18px;background:#ccffff"></div>
<div class="b" style="left:815px;top:801px;width:306px;height:18px;background:#66ff66"></div>
<div class="b" style="left:1121px;top:801px;width:96px;height:18px;background:#ccffff"></div>
<div class="b" style="left:0;top:820px;width:1217px;height:1px;background:#ebebeb"></div>
<div class="b" style="left:101px;top:801px;width:1px;height:18px;background:#000"></div>
<div class="b" style="left:203px;top:801px;width:1px;height:18px;background:#000"></div>
<div class="b" style="left:305px;top:801px;width:1px;height:18px;background:#000"></div>
<div class="b" style="left:407px;top:801px;width:1px;height:18px;background:#000"></div>
<div class="b" style="left:509px;top:801px;width:1px;height:18px;background:#000"></div>
<div class="b" style="left:611px;top:801px;width:1px;height:18px;background:#000"></div>
<div class="b" style="left:713px;top:801px;width:1px;height:18px;background:#000"></div>
<div class="b" style="left:815px;top:801px;width:1px;height:18px;background:#000"></div>
<div class="b" style="left:917px;top:801px;width:1px;height:18px;background:#000"></div>
<div class="b" style="left:1019px;top:801px;width:1px;height:18px;background:#000"></div>
<div class="b" style="left:1121px;top:801px;width:1px;height:18px;background:#000"></div>
<div class="t" style="left:3.50px;top:804.84px;font-size:14.6px;color:#000;letter-spacing:0.6px;">41</div>
<div class="t" style="left:104.50px;top:805.35px;font-size:14.0px;color:#000;">NZ</div>
<div class="t" style="left:206.50px;top:805.35px;font-size:14.0px;color:#000;">AWAZ</div>
<div class="t" style="left:308.50px;top:805.35px;font-size:14.0px;color:#000;">VKI</div>
<div class="t" style="left:410.50px;top:805.35px;font-size:14.0px;color:#000;letter-spacing:0.2px;">/home/kaspe...</div>
<div class="t" style="left:512.50px;top:805.35px;font-size:14.0px;color:#000;letter-spacing:-0.15px;">AWAZ.NZ..V...</div>
<div class="t" style="left:614.50px;top:804.84px;font-size:14.6px;color:#000;letter-spacing:0.6px;">2014-04-13...</div>
<div class="t" style="left:716.50px;top:804.84px;font-size:14.6px;color:#000;letter-spacing:0.6px;">2014-04-13...</div>
<div class="t" style="left:818.50px;top:804.84px;font-size:14.6px;color:#000;letter-spacing:0.6px;">86400</div>
<div class="t" style="left:920.50px;top:804.84px;font-size:14.6px;color:#000;letter-spacing:0.6px;">0</div>
<div class="t" style="left:1022.50px;top:804.84px;font-size:14.6px;color:#000;letter-spacing:0.6px;">0.1</div>
<div class="t" style="left:1124.50px;top:805.35px;font-size:14.0px;color:#000;">A</div>
<div class="b" style="left:0;top:821px;width:101px;height:18px;background:#ccffcc"></div>
<div class="b" style="left:101px;top:821px;width:714px;height:18px;background:#ccffff"></div>
<div class="b" style="left:815px;top:821px;width:306px;height:18px;background:#66ff66"></div>
<div class="b" style="left:1121px;top:821px;width:96px;height:18px;background:#ccffff"></div>
<div class="b" style="left:0;top:840px;width:1217px;height:1px;background:#ebebeb"></div>
<div class="b" style="left:101px;top:821px;width:1px;height:18px;background:#000"></div>
<div class="b" style="left:203px;top:821px;width:1px;height:18px;background:#000"></div>
<div class="b" style="left:305px;top:821px;width:1px;height:18px;background:#000"></div>
<div class="b" style="left:407px;top:821px;width:1px;height:18px;background:#000"></div>
<div class="b" style="left:509px;top:821px;width:1px;height:18px;background:#000"></div>
<div class="b" style="left:611px;top:821px;width:1px;height:18px;background:#000"></div>
<div class="b" style="left:713px;top:821px;width:1px;height:18px;background:#000"></div>
<div class="b" style="left:815px;top:821px;width:1px;height:18px;background:#000"></div>
<div class="b" style="left:917px;top:821px;width:1px;height:18px;background:#000"></div>
<div class="b" style="left:1019px;top:821px;width:1px;height:18px;background:#000"></div>
<div class="b" style="left:1121px;top:821px;width:1px;height:18px;background:#000"></div>
<div class="t" style="left:3.50px;top:824.84px;font-size:14.6px;color:#000;letter-spacing:0.6px;">42</div>
<div class="t" style="left:104.50px;top:825.35px;font-size:14.0px;color:#000;">NZ</div>
<div class="t" style="left:206.50px;top:825.35px;font-size:14.0px;color:#000;">AWAZ</div>
<div class="t" style="left:308.50px;top:825.35px;font-size:14.0px;color:#000;">LCQ</div>
<div class="t" style="left:410.50px;top:825.35px;font-size:14.0px;color:#000;letter-spacing:0.2px;">/home/kaspe...</div>
<div class="t" style="left:512.50px;top:825.35px;font-size:14.0px;color:#000;letter-spacing:-0.15px;">AWAZ.NZ..L...</div>
<div class="t" style="left:614.50px;top:824.84px;font-size:14.6px;color:#000;letter-spacing:0.6px;">2014-04-14...</div>
<div class="t" style="left:716.50px;top:824.84px;font-size:14.6px;color:#000;letter-spacing:0.6px;">2014-04-14...</div>
<div class="t" style="left:818.50px;top:824.84px;font-size:14.6px;color:#000;letter-spacing:0.6px;">85561</div>
<div class="t" style="left:920.50px;top:824.84px;font-size:14.6px;color:#000;letter-spacing:0.6px;">0</div>
<div class="t" style="left:1022.50px;top:824.84px;font-size:14.6px;color:#000;letter-spacing:0.6px;">1</div>
<div class="t" style="left:1124.50px;top:825.35px;font-size:14.0px;color:#000;">A</div>
<div class="b" style="left:0;top:841px;width:101px;height:18px;background:#ccffcc"></div>
<div class="b" style="left:101px;top:841px;width:714px;height:18px;background:#ccffff"></div>
<div class="b" style="left:815px;top:841px;width:306px;height:18px;background:#66ff66"></div>
<div class="b" style="left:1121px;top:841px;width:96px;height:18px;background:#ccffff"></div>
<div class="b" style="left:0;top:860px;width:1217px;height:1px;background:#ebebeb"></div>
<div class="b" style="left:101px;top:841px;width:1px;height:18px;background:#000"></div>
<div class="b" style="left:203px;top:841px;width:1px;height:18px;background:#000"></div>
<div class="b" style="left:305px;top:841px;width:1px;height:18px;background:#000"></div>
<div class="b" style="left:407px;top:841px;width:1px;height:18px;background:#000"></div>
<div class="b" style="left:509px;top:841px;width:1px;height:18px;background:#000"></div>
<div class="b" style="left:611px;top:841px;width:1px;height:18px;background:#000"></div>
<div class="b" style="left:713px;top:841px;width:1px;height:18px;background:#000"></div>
<div class="b" style="left:815px;top:841px;width:1px;height:18px;background:#000"></div>
<div class="b" style="left:917px;top:841px;width:1px;height:18px;background:#000"></div>
<div class="b" style="left:1019px;top:841px;width:1px;height:18px;background:#000"></div>
<div class="b" style="left:1121px;top:841px;width:1px;height:18px;background:#000"></div>
<div class="t" style="left:3.50px;top:844.84px;font-size:14.6px;color:#000;letter-spacing:0.6px;">43</div>
<div class="t" style="left:104.50px;top:845.35px;font-size:14.0px;color:#000;">NZ</div>
<div class="t" style="left:206.50px;top:845.35px;font-size:14.0px;color:#000;">AWAZ</div>
<div class="t" style="left:308.50px;top:845.35px;font-size:14.0px;color:#000;">EH1</div>
<div class="t" style="left:410.50px;top:845.35px;font-size:14.0px;color:#000;letter-spacing:0.2px;">/home/kaspe...</div>
<div class="t" style="left:512.50px;top:845.35px;font-size:14.0px;color:#000;letter-spacing:-0.15px;">AWAZ.NZ..E...</div>
<div class="t" style="left:614.50px;top:844.84px;font-size:14.6px;color:#000;letter-spacing:0.6px;">2014-04-14...</div>
<div class="t" style="left:716.50px;top:844.84px;font-size:14.6px;color:#000;letter-spacing:0.6px;">2014-04-14...</div>
<div class="t" style="left:818.50px;top:844.84px;font-size:14.6px;color:#000;letter-spacing:0.6px;">85398.7900...</div>
<div class="t" style="left:920.50px;top:844.84px;font-size:14.6px;color:#000;letter-spacing:0.6px;">0</div>
<div class="t" style="left:1022.50px;top:844.84px;font-size:14.6px;color:#000;letter-spacing:0.6px;">100</div>
<div class="t" style="left:1124.50px;top:845.35px;font-size:14.0px;color:#000;">A</div>
<div class="b" style="left:0;top:861px;width:101px;height:18px;background:#ccffcc"></div>
<div class="b" style="left:101px;top:861px;width:714px;height:18px;background:#ccffff"></div>
<div class="b" style="left:815px;top:861px;width:306px;height:18px;background:#66ff66"></div>
<div class="b" style="left:1121px;top:861px;width:96px;height:18px;background:#ccffff"></div>
<div class="b" style="left:0;top:880px;width:1217px;height:1px;background:#ebebeb"></div>
<div class="b" style="left:101px;top:861px;width:1px;height:18px;background:#000"></div>
<div class="b" style="left:203px;top:861px;width:1px;height:18px;background:#000"></div>
<div class="b" style="left:305px;top:861px;width:1px;height:18px;background:#000"></div>
<div class="b" style="left:407px;top:861px;width:1px;height:18px;background:#000"></div>
<div class="b" style="left:509px;top:861px;width:1px;height:18px;background:#000"></div>
<div class="b" style="left:611px;top:861px;width:1px;height:18px;background:#000"></div>
<div class="b" style="left:713px;top:861px;width:1px;height:18px;background:#000"></div>
<div class="b" style="left:815px;top:861px;width:1px;height:18px;background:#000"></div>
<div class="b" style="left:917px;top:861px;width:1px;height:18px;background:#000"></div>
<div class="b" style="left:1019px;top:861px;width:1px;height:18px;background:#000"></div>
<div class="b" style="left:1121px;top:861px;width:1px;height:18px;background:#000"></div>
<div class="t" style="left:3.50px;top:864.84px;font-size:14.6px;color:#000;letter-spacing:0.6px;">44</div>
<div class="t" style="left:104.50px;top:865.35px;font-size:14.0px;color:#000;">NZ</div>
<div class="t" style="left:206.50px;top:865.35px;font-size:14.0px;color:#000;">AWAZ</div>
<div class="t" style="left:308.50px;top:865.35px;font-size:14.0px;color:#000;">EH1</div>
<div class="t" style="left:410.50px;top:865.35px;font-size:14.0px;color:#000;letter-spacing:0.2px;">/home/kaspe...</div>
<div class="t" style="left:512.50px;top:865.35px;font-size:14.0px;color:#000;letter-spacing:-0.15px;">AWAZ.NZ..E...</div>
<div class="t" style="left:614.50px;top:864.84px;font-size:14.6px;color:#000;letter-spacing:0.6px;">2014-04-13...</div>
<div class="t" style="left:716.50px;top:864.84px;font-size:14.6px;color:#000;letter-spacing:0.6px;">2014-04-13...</div>
<div class="t" style="left:818.50px;top:864.84px;font-size:14.6px;color:#000;letter-spacing:0.6px;">86400</div>
<div class="t" style="left:920.50px;top:864.84px;font-size:14.6px;color:#000;letter-spacing:0.6px;">0</div>
<div class="t" style="left:1022.50px;top:864.84px;font-size:14.6px;color:#000;letter-spacing:0.6px;">100</div>
<div class="t" style="left:1124.50px;top:865.35px;font-size:14.0px;color:#000;">A</div>
</div>
<div class="b" style="left:1889px;top:219px;width:13px;height:868px;background:#d4d4d2"></div>
<div class="b" style="left:1892px;top:222px;width:7px;height:367px;border-radius:4px;background:#9c9c9e"></div>
<div class="b" style="left:672px;top:1087px;width:1214px;height:13px;background:#d4d4d2"></div>
<div class="b" style="left:675px;top:1090px;width:1185px;height:7px;border-radius:4px;background:#9c9c9e"></div>
<div class="b" style="left:1886px;top:1087px;width:16px;height:13px;background:#ececea"></div>
<div class="btnd" style="left:673px;top:1103px;width:90px;height:31px"></div>
<div class="t" style="left:710.00px;top:1112.81px;font-size:14.4px;color:#a0a4a6;">&lt;&lt;</div>
<div class="btnd" style="left:775px;top:1103px;width:90px;height:31px"></div>
<div class="t" style="left:816.00px;top:1112.81px;font-size:14.4px;color:#a0a4a6;">&lt;</div>
<div class="t" style="left:877.80px;top:1110.81px;font-size:14.4px;font-weight:700;">1</div>
<div class="t" style="left:898.00px;top:1110.81px;font-size:14.4px;">to</div>
<div class="t" style="left:923.80px;top:1110.81px;font-size:14.4px;font-weight:700;letter-spacing:1.6px;">100</div>
<div class="t" style="left:964.40px;top:1110.81px;font-size:14.4px;">of</div>
<div class="t" style="left:988.30px;top:1110.81px;font-size:14.4px;font-weight:700;letter-spacing:1.6px;">432</div>
<div class="btn" style="left:1029px;top:1103px;width:91px;height:31px"></div>
<div class="t" style="left:1070.30px;top:1112.81px;font-size:14.4px;">&gt;</div>
<div class="btn" style="left:1132px;top:1103px;width:90px;height:31px"></div>
<div class="t" style="left:1168.50px;top:1112.81px;font-size:14.4px;">&gt;&gt;</div>
<div class="t" style="left:11.60px;top:1152.90px;font-size:14.3px;font-weight:700;letter-spacing:0.4px;">SQLite 3.8.4.2</div>
<div class="t" style="left:134.60px;top:1152.73px;font-size:14.5px;">Gecko 28.0</div>
<div class="t" style="left:230.00px;top:1152.73px;font-size:14.5px;color:#7d8284;letter-spacing:0.5px;">0.8.1</div>
<div class="t" style="left:286.50px;top:1153.15px;font-size:14.0px;font-weight:700;letter-spacing:-0.35px;">Exclusive</div>
<div class="t" style="left:370.00px;top:1153.47px;font-size:14.8px;">Number of files in selected directory: 8</div>
<div class="t" style="left:1854.60px;top:1153.06px;font-size:14.1px;">ET: 3 ms</div>
</div></body></html>
